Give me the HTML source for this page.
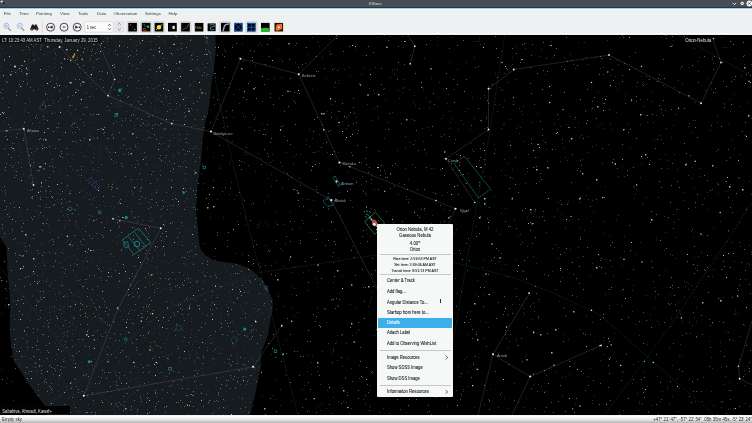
<!DOCTYPE html>
<html><head><meta charset="utf-8">
<style>
*{margin:0;padding:0;box-sizing:border-box}
html,body{width:752px;height:423px;overflow:hidden;background:#000;font-family:"Liberation Sans",sans-serif}
#wrap{position:absolute;left:0;top:0;width:752px;height:423px;overflow:hidden;will-change:transform}
.a{position:absolute}
#title{left:0;top:0;width:752px;height:8px;background:#464d54}
#blue{left:0;top:8px;width:752px;height:1px;background:#8fd0f2}
#bar{left:0;top:9px;width:752px;height:26px;background:#eff0f1}
.menu{top:11.1px;font-size:4.4px;line-height:5px;color:#3d4146;white-space:nowrap}
#sky{left:0;top:35px;width:752px;height:380px;background:#000;overflow:hidden}
#status{left:0;top:415px;width:752px;height:8px;background:linear-gradient(#f2f2f2 0%,#fdfdfd 22%,#e4e4e4 60%,#b4b4b4 100%)}
.st{font-size:4.4px;line-height:5px;color:#3a3e42;white-space:nowrap;top:416.6px}
#ctx{left:377px;top:224px;width:76px;height:173.4px;background:#f6f7f7;border-radius:1px;overflow:hidden}
.ci{position:absolute;left:10px;font-size:4.7px;line-height:5px;color:#202326;-webkit-text-stroke-width:0.08px;white-space:nowrap;transform:scaleX(0.89);transform-origin:0 0}
.ct{position:absolute;left:0;width:76px;text-align:center;line-height:5px;color:#202326;-webkit-text-stroke-width:0.08px;white-space:nowrap;transform:scaleX(0.91);transform-origin:38px 0}
.sep{position:absolute;left:2.5px;width:71px;height:0.6px;background:#c6c8ca}
.tb{position:absolute;top:22.8px;width:8.8px;height:8.8px;background:#000}
.tf{position:absolute;top:21.5px;width:11.5px;height:11.5px;background:#dcdddf;border-radius:1px}
</style></head><body><div id="wrap">
<div id="title" class="a"></div>
<div class="a" style="left:369px;top:0.6px;font-size:4.2px;line-height:5px;color:#e0e2e4">KStars</div>
<div id="blue" class="a"></div>
<div id="bar" class="a"></div>
<div class="a" style="left:0;top:33px;width:752px;height:1px;background:#f8f8f8"></div>
<div class="a" style="left:0;top:9px;width:752px;height:1px;background:#f6f7f8"></div>
<div class="a menu" style="left:3.8px">File</div>
<div class="a menu" style="left:19px">Time</div>
<div class="a menu" style="left:36px">Pointing</div>
<div class="a menu" style="left:60px">View</div>
<div class="a menu" style="left:78px">Tools</div>
<div class="a menu" style="left:97px">Data</div>
<div class="a menu" style="left:113.6px">Observation</div>
<div class="a menu" style="left:145px">Settings</div>
<div class="a menu" style="left:168.4px">Help</div>


<svg class="a" style="left:0;top:9px" width="300" height="26" viewBox="0 9 300 26">
 <!-- zoom in -->
 <g><line x1="8" y1="27.8" x2="10.9" y2="30.9" stroke="#8a8e92" stroke-width="1.1"/>
 <circle cx="6.4" cy="25.7" r="2.5" fill="#e8f0f8" stroke="#8aaed8" stroke-width="0.75"/>
 <path d="M5.2,25.7h2.4M6.4,24.5v2.4" stroke="#6a90c8" stroke-width="0.5"/></g>
 <g><line x1="21.4" y1="27.8" x2="24.3" y2="30.9" stroke="#8a8e92" stroke-width="1.1"/>
 <circle cx="19.8" cy="25.7" r="2.5" fill="#e8f0f8" stroke="#8aaed8" stroke-width="0.75"/>
 <path d="M18.6,25.7h2.4" stroke="#6a90c8" stroke-width="0.5"/></g>
 <!-- binoculars -->
 <g><path d="M30.2,29.2 L32,24.6 L33.6,24.4 L34.3,26 L35,24.4 L36.6,24.6 L38.6,29.2 Z" fill="#1a1a1a"/>
 <circle cx="32" cy="28.9" r="1.6" fill="#1a1a1a"/><circle cx="36.8" cy="28.9" r="1.6" fill="#1a1a1a"/>
 <circle cx="32" cy="29.1" r="0.9" fill="#b5501a"/><circle cx="36.8" cy="29.1" r="0.9" fill="#b5501a"/></g>
 <line x1="42.4" y1="20.5" x2="42.4" y2="33" stroke="#c5c7c9" stroke-width="0.5"/>
 <!-- media -->
 <circle cx="50.6" cy="27.2" r="4" fill="#f4f4f4" stroke="#33363a" stroke-width="0.9"/>
 <path d="M52.6,25.6 L49.4,27.2 L52.6,28.8 Z M48,26.4h1.2v1.6h-1.2z" fill="#222"/>
 <circle cx="64.05" cy="27.2" r="4" fill="#f4f4f4" stroke="#33363a" stroke-width="0.9"/>
 <path d="M62.8,26.1h0.9v2.2h-0.9z M64.4,26.1h0.9v2.2h-0.9z" fill="#666"/>
 <circle cx="77.2" cy="27.2" r="4" fill="#f4f4f4" stroke="#33363a" stroke-width="0.9"/>
 <path d="M75.2,25.6 L78.4,27.2 L75.2,28.8 Z M78.8,26.4h1.2v1.6h-1.2z" fill="#222"/>
 <!-- spinbox -->
 <rect x="84.7" y="21.7" width="28.3" height="10.4" rx="0.8" fill="#fcfcfc" stroke="#c4c6c8" stroke-width="0.5"/>
 <text x="86.7" y="29" font-family="Liberation Sans" font-size="5" textLength="9.6" lengthAdjust="spacingAndGlyphs" fill="#2a2e32">1 sec</text>
 <path d="M108.1,25.7 L109.5,24.3 L110.9,25.7 M108.1,28.4 L109.5,29.8 L110.9,28.4" fill="none" stroke="#31363b" stroke-width="0.8"/>
 <rect x="115" y="21.6" width="8.6" height="4.3" rx="0.6" fill="#eaebec" stroke="#c4c6c8" stroke-width="0.4"/>
 <rect x="115" y="27.5" width="8.6" height="4.3" rx="0.6" fill="#eaebec" stroke="#c4c6c8" stroke-width="0.4"/>
 <path d="M117.8,24.6 L119.3,23.2 L120.8,24.6 M117.8,28.8 L119.3,30.2 L120.8,28.8" fill="none" stroke="#4a4e52" stroke-width="0.65"/>
 <!-- toggle frames -->
 <rect x="127" y="21.6" width="11.2" height="11.2" rx="0.8" fill="#dfe0e1" stroke="#c9cacc" stroke-width="0.5"/>
 <rect x="140.6" y="21.6" width="11.2" height="11.2" rx="0.8" fill="#dfe0e1" stroke="#c9cacc" stroke-width="0.5"/>
 <rect x="153.5" y="21.6" width="11.2" height="11.2" rx="0.8" fill="#dfe0e1" stroke="#c9cacc" stroke-width="0.5"/>
 <rect x="180" y="21.6" width="11.2" height="11.2" rx="0.8" fill="#dfe0e1" stroke="#c9cacc" stroke-width="0.5"/>
 <rect x="219.5" y="21.6" width="11.2" height="11.2" rx="0.8" fill="#dfe0e1" stroke="#c9cacc" stroke-width="0.5"/>
 <rect x="245.8" y="21.6" width="11.2" height="11.2" rx="0.8" fill="#dfe0e1" stroke="#c9cacc" stroke-width="0.5"/>
 <!-- icons -->
 <rect x="128.3" y="22.9" width="8.6" height="8.6" fill="#000"/>
 <circle cx="130.4" cy="25" r="0.6" fill="#d88"/><path d="M131.5,28 L133.5,26.8" stroke="#4a7a9a" stroke-width="0.5"/><ellipse cx="134.7" cy="29.2" rx="0.9" ry="0.5" fill="#a9a0e0"/>
 <rect x="141.8" y="22.9" width="8.6" height="8.6" fill="#000"/>
 <path d="M142.6,24.2 L144.4,24.2 L144.4,26 L147,26.6" fill="none" stroke="#2a8a8a" stroke-width="0.6"/><circle cx="148.1" cy="26.7" r="1.2" fill="#1c1"/><path d="M143,28.5 L145.6,28.6 L146,30.7 L143.5,30.4 Z" fill="none" stroke="#c22" stroke-width="0.9"/>
 <rect x="154.7" y="22.9" width="8.6" height="8.6" fill="#000"/>
 <circle cx="159" cy="27.2" r="2.2" fill="#f2e25a"/><path d="M155.8,30 L162.3,24.4" stroke="#e8e030" stroke-width="0.9"/>
 <rect x="168" y="22.9" width="8.8" height="8.6" fill="#000"/>
 <path d="M172.2,26.4 L174.5,25.5 L175,28.6 L172.8,29.6 Z" fill="#f0f0f0"/><path d="M169.5,25.5 L171.5,26.5" stroke="#777" stroke-width="0.4"/>
 <rect x="181.2" y="22.9" width="8.6" height="8.6" fill="#000"/>
 <path d="M182.5,30 L185,28.5 L187,27.5 L188,25 L189,24.5" fill="none" stroke="#aaa" stroke-width="0.5"/>
 <rect x="194.8" y="22.9" width="8.6" height="8.6" fill="#000"/>
 <text x="195.3" y="28.9" font-family="Liberation Serif" font-size="4" fill="#c9c24a">Orb</text>
 <rect x="207.6" y="23.4" width="8" height="7.8" fill="#000"/>
 <path d="M209.2,25 L213.8,24.6 L214.6,26.4 L210,27.4 L211,30 L214.4,29.6" fill="none" stroke="#6fa8d0" stroke-width="0.7"/>
 <rect x="221" y="22.9" width="8.6" height="8.6" fill="#000"/>
 <path d="M223,31 L224.5,26 C225,24.5 226,24 229,24" fill="none" stroke="#98a4c8" stroke-width="1.5"/>
 <rect x="234" y="22.9" width="8.6" height="8.6" fill="#000"/>
 <path d="M234.5,23.4h7.6v7.6h-7.6z M234.5,23.4 L242.1,31 M242.1,23.4 L234.5,31" fill="none" stroke="#2a78ff" stroke-width="0.9" stroke-dasharray="1.1,0.35"/>
 <rect x="247" y="22.9" width="8.6" height="8.6" fill="#000"/>
 <path d="M247.5,23.4h7.6v7.6h-7.6z M251.3,23.4v7.6 M247.5,27.2h7.6" fill="none" stroke="#2a78ff" stroke-width="0.9" stroke-dasharray="1.1,0.35"/>
 <rect x="261" y="22.9" width="8.6" height="8.6" fill="#000"/>
 <path d="M261,28.2 Q265.3,27.4 269.6,28.2 V31.5 H261 Z" fill="#22bb22"/>
 <rect x="274.5" y="22.9" width="8.6" height="8.6" fill="#2a1000"/>
 <path d="M275.5,29.5 L276.5,24.5 L282,23.8 L282.2,29 L277,31 Z" fill="#e8702a"/><circle cx="278.8" cy="27.2" r="1" fill="#fff8e8"/>
</svg>
<!-- titlebar widgets -->
<svg class="a" style="left:0;top:0" width="752" height="8" viewBox="0 0 752 8">
 <circle cx="1.8" cy="1.6" r="1.2" fill="#ddd"/><path d="M2.5,2.6 L4.8,3.6" stroke="#111" stroke-width="1"/>
 <path d="M732.6,2.9 L734.4,4.6 L736.2,2.9" fill="none" stroke="#f0f0f0" stroke-width="0.95"/>
 <path d="M742.2,1.3 L744.3,3.4 L742.2,5.5 L740.1,3.4 Z" fill="#eeeeee"/><circle cx="742.2" cy="3.4" r="1.45" fill="#eeeeee"/><circle cx="742.2" cy="3.4" r="0.55" fill="#464d54"/>
 <circle cx="749.4" cy="3.5" r="2.9" fill="#f6f6f6"/>
 <path d="M748.3,2.4 L750.5,4.6 M750.5,2.4 L748.3,4.6" stroke="#2a2e33" stroke-width="0.8"/>
 <rect x="0" y="7" width="752" height="1" fill="#30353a"/>
</svg>

<div id="sky" class="a">
<svg width="752" height="380" viewBox="0 35 752 380" style="position:absolute;left:0;top:0">
<path d="M0,35 L215.5,35 L215.7,52 L213.6,70 L211.1,87 L209.5,105 L205.3,122 L202.4,140 L201.5,157 L199,175 L196.9,192 L196,210 L197.7,227 L199,243 L200.3,248 L202,251 L205.4,255 L213,260.3 L223.8,261.9 L236,263.4 L248.4,268 L257.6,275 L265.3,284.2 L269.9,293.4 L272.7,300 L272.5,310 L271.1,317 L268,335 L261.5,352 L260,370 L255.7,392 L250,415 L47,415 L46,407 L36.5,395 L26,380 L13.3,360 L10.1,337 L9.8,315 L10.4,305 L9.6,292 L7.4,270 L7.2,260 L6.4,247 L0,236.7 Z" fill="#161b20"/>
<path d="M331,112h1v1h-1zM59,294h1v1h-1zM444,249h1v1h-1zM381,84h1v1h-1zM603,128h1v1h-1zM477,280h1v1h-1zM490,389h1v1h-1zM74,378h1v1h-1zM217,377h1v1h-1zM431,135h1v1h-1zM18,163h1v1h-1zM5,81h1v1h-1zM121,316h1v1h-1zM484,43h1v1h-1zM646,295h1v1h-1zM281,59h1v1h-1zM385,173h1v1h-1zM721,367h1v1h-1zM339,261h1v1h-1zM640,242h1v1h-1zM271,354h1v1h-1zM102,369h1v1h-1zM614,333h1v1h-1zM635,194h1v1h-1zM683,192h1v1h-1zM202,189h1v1h-1zM515,259h1v1h-1zM321,403h1v1h-1zM320,410h1v1h-1zM442,248h1v1h-1zM249,397h1v1h-1zM627,124h1v1h-1zM463,124h1v1h-1zM578,122h1v1h-1zM31,258h1v1h-1zM436,382h1v1h-1zM673,40h1v1h-1zM671,185h1v1h-1zM600,360h1v1h-1zM124,80h1v1h-1zM53,402h1v1h-1zM239,266h1v1h-1zM739,154h1v1h-1zM83,114h1v1h-1zM353,178h1v1h-1zM728,124h1v1h-1zM137,45h1v1h-1zM229,351h1v1h-1zM512,178h1v1h-1zM617,304h1v1h-1zM373,90h1v1h-1zM464,359h1v1h-1zM13,257h1v1h-1zM76,194h1v1h-1zM100,335h1v1h-1zM588,136h1v1h-1zM290,211h1v1h-1zM318,42h1v1h-1zM630,148h1v1h-1zM12,219h1v1h-1zM61,178h1v1h-1zM718,193h1v1h-1zM371,183h1v1h-1zM329,39h1v1h-1zM378,164h1v1h-1zM146,180h1v1h-1zM608,144h1v1h-1zM724,104h1v1h-1zM116,45h1v1h-1zM147,174h1v1h-1zM15,362h1v1h-1zM471,143h1v1h-1zM611,266h1v1h-1zM304,385h1v1h-1zM499,104h1v1h-1zM648,412h1v1h-1zM15,170h1v1h-1zM734,261h1v1h-1zM120,81h1v1h-1zM584,42h1v1h-1zM228,370h1v1h-1zM594,341h1v1h-1zM609,236h1v1h-1zM491,190h1v1h-1zM97,42h1v1h-1zM149,206h1v1h-1zM166,235h1v1h-1zM67,246h1v1h-1zM280,405h1v1h-1zM64,216h1v1h-1zM179,388h1v1h-1zM447,103h1v1h-1zM269,56h1v1h-1zM390,36h1v1h-1zM559,301h1v1h-1zM356,49h1v1h-1zM350,75h1v1h-1zM10,132h1v1h-1zM386,224h1v1h-1zM483,259h1v1h-1zM236,253h1v1h-1zM140,168h1v1h-1zM171,154h1v1h-1zM275,399h1v1h-1zM602,58h1v1h-1zM278,49h1v1h-1zM242,44h1v1h-1zM534,307h1v1h-1zM676,209h1v1h-1zM436,397h1v1h-1zM65,86h1v1h-1zM54,63h1v1h-1zM525,356h1v1h-1zM434,296h1v1h-1zM508,408h1v1h-1zM259,263h1v1h-1zM47,111h1v1h-1zM136,87h1v1h-1zM229,163h1v1h-1zM336,118h1v1h-1zM560,126h1v1h-1zM430,40h1v1h-1zM210,298h1v1h-1zM229,87h1v1h-1zM372,373h1v1h-1zM166,115h1v1h-1zM422,272h1v1h-1zM339,80h1v1h-1zM312,256h1v1h-1zM291,294h1v1h-1zM677,378h1v1h-1zM70,114h1v1h-1zM726,191h1v1h-1zM328,205h1v1h-1zM639,401h1v1h-1zM328,384h1v1h-1zM749,181h1v1h-1zM136,390h1v1h-1zM444,233h1v1h-1zM51,136h1v1h-1zM8,93h1v1h-1zM463,391h1v1h-1zM531,319h1v1h-1zM129,277h1v1h-1zM154,292h1v1h-1zM59,92h1v1h-1zM569,273h1v1h-1zM252,264h1v1h-1zM48,291h1v1h-1zM207,148h1v1h-1zM359,330h1v1h-1zM137,190h1v1h-1zM576,296h1v1h-1zM545,74h1v1h-1zM176,376h1v1h-1zM670,254h1v1h-1zM747,366h1v1h-1zM119,361h1v1h-1zM520,127h1v1h-1zM42,78h1v1h-1zM203,314h1v1h-1zM370,385h1v1h-1zM134,284h1v1h-1zM284,171h1v1h-1zM470,366h1v1h-1zM236,195h1v1h-1zM578,42h1v1h-1zM288,175h1v1h-1zM169,56h1v1h-1zM460,175h1v1h-1zM545,391h1v1h-1zM605,186h1v1h-1zM695,401h1v1h-1zM339,68h1v1h-1zM1,241h1v1h-1zM357,44h1v1h-1zM203,394h1v1h-1zM394,74h1v1h-1zM318,312h1v1h-1zM118,122h1v1h-1zM12,347h1v1h-1zM123,239h1v1h-1zM519,299h1v1h-1zM616,361h1v1h-1zM478,357h1v1h-1zM387,221h1v1h-1zM594,395h1v1h-1zM283,344h1v1h-1zM372,291h1v1h-1zM367,233h1v1h-1zM210,109h1v1h-1zM565,376h1v1h-1zM675,258h1v1h-1zM219,278h1v1h-1zM399,388h1v1h-1zM38,101h1v1h-1zM132,212h1v1h-1zM738,135h1v1h-1zM347,392h1v1h-1zM680,313h1v1h-1zM651,92h1v1h-1zM68,162h1v1h-1zM126,295h1v1h-1zM112,240h1v1h-1zM299,227h1v1h-1zM230,161h1v1h-1zM161,127h1v1h-1zM89,181h1v1h-1zM311,362h1v1h-1zM0,75h1v1h-1zM537,157h1v1h-1zM196,381h1v1h-1zM49,343h1v1h-1zM92,250h1v1h-1zM406,412h1v1h-1zM327,111h1v1h-1zM423,354h1v1h-1zM120,249h1v1h-1zM181,255h1v1h-1zM480,98h1v1h-1zM539,301h1v1h-1zM370,405h1v1h-1zM286,152h1v1h-1zM682,66h1v1h-1zM194,364h1v1h-1zM219,194h1v1h-1zM164,241h1v1h-1zM259,222h1v1h-1zM331,353h1v1h-1zM135,229h1v1h-1zM69,191h1v1h-1zM207,313h1v1h-1zM418,395h1v1h-1zM148,122h1v1h-1zM480,321h1v1h-1zM500,261h1v1h-1zM108,149h1v1h-1zM712,59h1v1h-1zM296,154h1v1h-1zM647,344h1v1h-1zM734,148h1v1h-1zM642,403h1v1h-1zM236,359h1v1h-1zM242,376h1v1h-1zM494,144h1v1h-1zM431,414h1v1h-1zM619,83h1v1h-1zM583,256h1v1h-1zM694,187h1v1h-1zM377,312h1v1h-1zM337,179h1v1h-1zM91,70h1v1h-1zM558,247h1v1h-1z" fill="#2a2c2c"/>
<path d="M74,309h1v1h-1zM564,252h1v1h-1zM429,108h1v1h-1zM351,408h1v1h-1zM40,377h1v1h-1zM149,249h1v1h-1zM451,118h1v1h-1zM228,307h1v1h-1zM345,139h1v1h-1zM673,214h1v1h-1zM28,163h1v1h-1zM246,335h1v1h-1zM513,101h1v1h-1zM43,85h1v1h-1zM28,67h1v1h-1zM739,222h1v1h-1zM692,167h1v1h-1zM543,140h1v1h-1zM390,77h1v1h-1zM667,389h1v1h-1zM691,285h1v1h-1zM29,358h1v1h-1zM249,81h1v1h-1zM228,342h1v1h-1zM271,186h1v1h-1zM371,174h1v1h-1zM239,103h1v1h-1zM656,238h1v1h-1zM683,200h1v1h-1zM213,338h1v1h-1zM83,261h1v1h-1zM46,46h1v1h-1zM603,103h1v1h-1zM145,246h1v1h-1zM253,405h1v1h-1zM433,282h1v1h-1zM501,89h1v1h-1zM531,213h1v1h-1zM215,385h1v1h-1zM363,287h1v1h-1zM398,194h1v1h-1zM720,342h1v1h-1zM355,308h1v1h-1zM363,67h1v1h-1zM717,183h1v1h-1zM723,81h1v1h-1zM28,59h1v1h-1zM252,114h1v1h-1zM41,244h1v1h-1zM525,48h1v1h-1zM279,98h1v1h-1zM343,401h1v1h-1zM636,86h1v1h-1zM170,96h1v1h-1zM274,78h1v1h-1zM249,411h1v1h-1zM524,314h1v1h-1zM361,184h1v1h-1zM10,48h1v1h-1zM639,335h1v1h-1zM422,128h1v1h-1zM201,124h1v1h-1zM148,115h1v1h-1zM596,57h1v1h-1zM739,242h1v1h-1zM547,161h1v1h-1zM719,321h1v1h-1zM165,201h1v1h-1zM444,285h1v1h-1zM327,152h1v1h-1zM581,135h1v1h-1zM331,299h1v1h-1zM623,372h1v1h-1zM707,78h1v1h-1zM259,367h1v1h-1zM567,269h1v1h-1zM245,225h1v1h-1zM618,215h1v1h-1zM32,53h1v1h-1zM369,407h1v1h-1zM232,45h1v1h-1zM512,169h1v1h-1zM650,160h1v1h-1zM205,343h1v1h-1zM27,367h1v1h-1zM424,58h1v1h-1zM366,220h1v1h-1zM61,313h1v1h-1zM255,117h1v1h-1zM562,377h1v1h-1zM363,399h1v1h-1zM484,404h1v1h-1zM18,319h1v1h-1zM149,199h1v1h-1zM8,307h1v1h-1zM662,391h1v1h-1zM479,160h1v1h-1zM31,252h1v1h-1zM90,160h1v1h-1zM2,280h1v1h-1zM655,297h1v1h-1zM258,153h1v1h-1zM312,37h1v1h-1zM647,386h1v1h-1zM642,158h1v1h-1zM483,171h1v1h-1zM71,315h1v1h-1zM644,106h1v1h-1zM409,234h1v1h-1zM474,57h1v1h-1zM244,152h1v1h-1zM630,297h1v1h-1zM316,186h1v1h-1zM280,162h1v1h-1zM75,220h1v1h-1zM115,404h1v1h-1zM359,378h1v1h-1zM257,224h1v1h-1zM486,281h1v1h-1zM456,159h1v1h-1zM609,308h1v1h-1zM134,408h1v1h-1zM503,107h1v1h-1zM447,192h1v1h-1zM26,151h1v1h-1zM232,141h1v1h-1zM670,326h1v1h-1zM242,310h1v1h-1zM483,338h1v1h-1zM451,288h1v1h-1zM340,165h1v1h-1zM165,89h1v1h-1zM657,321h1v1h-1zM284,224h1v1h-1zM512,304h1v1h-1zM148,382h1v1h-1zM64,357h1v1h-1zM101,318h1v1h-1zM602,98h1v1h-1zM129,226h1v1h-1zM450,296h1v1h-1zM588,199h1v1h-1zM377,37h1v1h-1zM677,317h1v1h-1zM377,271h1v1h-1zM669,404h1v1h-1zM124,281h1v1h-1zM707,192h1v1h-1zM750,86h1v1h-1zM229,194h1v1h-1zM624,176h1v1h-1zM104,90h1v1h-1zM92,318h1v1h-1zM556,371h1v1h-1zM467,334h1v1h-1zM412,164h1v1h-1zM164,132h1v1h-1zM635,68h1v1h-1zM721,402h1v1h-1zM653,281h1v1h-1zM91,95h1v1h-1zM675,114h1v1h-1zM726,47h1v1h-1zM384,138h1v1h-1zM681,355h1v1h-1zM385,99h1v1h-1zM503,124h1v1h-1zM523,308h1v1h-1zM481,120h1v1h-1zM342,366h1v1h-1zM68,256h1v1h-1zM267,225h1v1h-1zM631,101h1v1h-1zM8,250h1v1h-1zM113,163h1v1h-1zM34,264h1v1h-1zM527,171h1v1h-1zM586,57h1v1h-1zM526,298h1v1h-1zM347,190h1v1h-1zM237,383h1v1h-1zM126,275h1v1h-1zM458,366h1v1h-1zM410,55h1v1h-1zM574,363h1v1h-1zM260,43h1v1h-1zM131,165h1v1h-1zM294,316h1v1h-1zM533,256h1v1h-1zM637,393h1v1h-1zM587,152h1v1h-1zM164,288h1v1h-1zM334,200h1v1h-1zM495,104h1v1h-1zM284,136h1v1h-1zM27,380h1v1h-1zM306,139h1v1h-1zM283,306h1v1h-1zM136,269h1v1h-1zM133,323h1v1h-1zM35,299h1v1h-1zM730,111h1v1h-1zM262,101h1v1h-1zM26,382h1v1h-1zM88,354h1v1h-1zM390,340h1v1h-1zM306,398h1v1h-1zM282,250h1v1h-1zM504,100h1v1h-1zM101,218h1v1h-1zM326,322h1v1h-1zM204,183h1v1h-1zM338,184h1v1h-1zM64,226h1v1h-1zM435,332h1v1h-1zM555,289h1v1h-1zM570,54h1v1h-1zM669,348h1v1h-1zM699,57h1v1h-1zM32,41h1v1h-1zM384,170h1v1h-1zM739,359h1v1h-1zM522,114h1v1h-1zM632,290h1v1h-1zM214,305h1v1h-1zM726,331h1v1h-1zM648,411h1v1h-1zM695,268h1v1h-1zM311,374h1v1h-1zM146,397h1v1h-1zM402,92h1v1h-1zM262,396h1v1h-1zM728,409h1v1h-1zM539,217h1v1h-1zM61,345h1v1h-1zM334,87h1v1h-1zM51,283h1v1h-1zM671,318h1v1h-1zM713,405h1v1h-1zM227,359h1v1h-1zM21,152h1v1h-1zM72,330h1v1h-1zM610,124h1v1h-1zM712,189h1v1h-1zM258,264h1v1h-1zM475,294h1v1h-1zM474,118h1v1h-1zM235,388h1v1h-1zM656,81h1v1h-1zM285,243h1v1h-1zM262,124h1v1h-1zM723,47h1v1h-1zM134,128h1v1h-1zM12,151h1v1h-1zM272,154h1v1h-1zM317,308h1v1h-1zM2,191h1v1h-1zM580,228h1v1h-1zM137,148h1v1h-1zM670,294h1v1h-1zM192,243h1v1h-1zM371,297h1v1h-1zM566,315h1v1h-1zM535,211h1v1h-1zM232,399h1v1h-1zM713,269h1v1h-1zM273,160h1v1h-1zM579,202h1v1h-1zM57,249h1v1h-1zM609,305h1v1h-1zM93,38h1v1h-1zM42,275h1v1h-1zM432,215h1v1h-1zM247,292h1v1h-1zM5,305h1v1h-1zM352,335h1v1h-1z" fill="#36322c"/>
<path d="M126,149h1v1h-1zM613,159h1v1h-1zM536,293h1v1h-1zM562,139h1v1h-1zM87,317h1v1h-1zM128,154h1v1h-1zM496,248h1v1h-1zM609,109h1v1h-1zM668,303h1v1h-1zM475,67h1v1h-1zM236,264h1v1h-1zM617,168h1v1h-1zM749,368h1v1h-1zM484,128h1v1h-1zM197,56h1v1h-1zM516,296h1v1h-1zM270,93h1v1h-1zM276,240h1v1h-1zM254,119h1v1h-1zM222,78h1v1h-1zM483,306h1v1h-1zM353,107h1v1h-1zM42,105h1v1h-1zM608,387h1v1h-1zM156,190h1v1h-1zM543,211h1v1h-1zM77,127h1v1h-1zM486,346h1v1h-1zM37,250h1v1h-1zM20,255h1v1h-1zM483,143h1v1h-1zM532,243h1v1h-1zM37,118h1v1h-1zM728,230h1v1h-1zM319,163h1v1h-1zM359,83h1v1h-1zM328,240h1v1h-1zM361,162h1v1h-1zM643,312h1v1h-1zM43,334h1v1h-1zM130,285h1v1h-1zM195,146h1v1h-1zM140,188h1v1h-1zM715,88h1v1h-1zM419,108h1v1h-1zM635,52h1v1h-1zM471,125h1v1h-1zM297,351h1v1h-1zM508,364h1v1h-1zM138,297h1v1h-1zM455,139h1v1h-1zM97,138h1v1h-1zM232,331h1v1h-1zM249,339h1v1h-1zM472,338h1v1h-1zM325,245h1v1h-1zM588,385h1v1h-1zM362,236h1v1h-1zM505,221h1v1h-1zM746,345h1v1h-1zM147,131h1v1h-1zM205,299h1v1h-1zM265,265h1v1h-1zM60,263h1v1h-1zM418,150h1v1h-1zM78,411h1v1h-1zM23,413h1v1h-1zM69,326h1v1h-1zM229,359h1v1h-1zM246,147h1v1h-1zM590,206h1v1h-1zM750,75h1v1h-1zM138,255h1v1h-1zM79,67h1v1h-1zM350,200h1v1h-1zM492,84h1v1h-1zM292,229h1v1h-1zM480,157h1v1h-1zM11,356h1v1h-1zM659,275h1v1h-1zM165,157h1v1h-1zM534,104h1v1h-1zM483,143h1v1h-1zM322,124h1v1h-1zM177,78h1v1h-1zM64,273h1v1h-1zM148,236h1v1h-1zM525,208h1v1h-1zM10,165h1v1h-1zM580,160h1v1h-1zM730,207h1v1h-1zM693,312h1v1h-1zM503,314h1v1h-1zM147,113h1v1h-1zM152,257h1v1h-1zM184,112h1v1h-1zM456,306h1v1h-1zM450,315h1v1h-1zM103,133h1v1h-1zM663,115h1v1h-1zM93,157h1v1h-1zM300,240h1v1h-1zM318,271h1v1h-1zM71,125h1v1h-1zM381,68h1v1h-1zM287,318h1v1h-1zM672,36h1v1h-1zM138,315h1v1h-1zM47,358h1v1h-1zM404,64h1v1h-1zM303,356h1v1h-1zM580,239h1v1h-1zM546,58h1v1h-1zM151,199h1v1h-1zM571,182h1v1h-1zM540,173h1v1h-1zM125,118h1v1h-1zM314,152h1v1h-1zM124,138h1v1h-1zM10,329h1v1h-1zM440,169h1v1h-1zM538,299h1v1h-1zM241,161h1v1h-1zM350,189h1v1h-1zM510,334h1v1h-1zM663,59h1v1h-1zM505,330h1v1h-1zM66,202h1v1h-1zM336,199h1v1h-1zM467,270h1v1h-1zM656,354h1v1h-1zM749,284h1v1h-1zM330,130h1v1h-1zM145,125h1v1h-1zM710,325h1v1h-1zM734,79h1v1h-1zM316,412h1v1h-1zM224,67h1v1h-1zM551,402h1v1h-1zM108,184h1v1h-1zM241,169h1v1h-1zM219,145h1v1h-1zM625,103h1v1h-1zM96,207h1v1h-1zM596,199h1v1h-1zM316,71h1v1h-1zM532,44h1v1h-1zM339,111h1v1h-1zM264,149h1v1h-1zM199,330h1v1h-1zM673,228h1v1h-1zM137,411h1v1h-1zM419,285h1v1h-1zM383,381h1v1h-1zM478,296h1v1h-1zM230,188h1v1h-1zM522,361h1v1h-1zM246,99h1v1h-1zM140,97h1v1h-1zM704,269h1v1h-1zM158,99h1v1h-1zM551,402h1v1h-1zM603,317h1v1h-1zM222,155h1v1h-1zM51,196h1v1h-1zM390,188h1v1h-1zM135,276h1v1h-1zM296,43h1v1h-1zM697,379h1v1h-1zM749,362h1v1h-1zM89,215h1v1h-1zM219,353h1v1h-1zM76,386h1v1h-1zM622,75h1v1h-1zM329,404h1v1h-1zM133,235h1v1h-1zM400,409h1v1h-1zM92,365h1v1h-1zM480,120h1v1h-1zM185,120h1v1h-1zM21,69h1v1h-1zM573,274h1v1h-1zM538,316h1v1h-1z" fill="#505250"/>
<path d="M590,334h1v1h-1zM74,95h1v1h-1zM625,94h1v1h-1zM411,316h1v1h-1zM154,77h1v1h-1zM63,132h1v1h-1zM53,87h1v1h-1zM225,87h1v1h-1zM86,406h1v1h-1zM665,87h1v1h-1zM23,188h1v1h-1zM275,379h1v1h-1zM346,238h1v1h-1zM668,168h1v1h-1zM460,253h1v1h-1zM221,82h1v1h-1zM660,401h1v1h-1zM660,159h1v1h-1zM516,69h1v1h-1zM319,134h1v1h-1zM507,347h1v1h-1zM81,119h1v1h-1zM449,161h1v1h-1zM334,68h1v1h-1zM300,154h1v1h-1zM222,54h1v1h-1zM654,308h1v1h-1zM208,38h1v1h-1zM591,221h1v1h-1zM133,42h1v1h-1zM379,412h1v1h-1zM356,180h1v1h-1zM664,250h1v1h-1zM243,198h1v1h-1zM63,307h1v1h-1zM728,231h1v1h-1zM174,258h1v1h-1zM356,332h1v1h-1zM720,351h1v1h-1zM356,117h1v1h-1zM104,135h1v1h-1zM575,404h1v1h-1zM270,249h1v1h-1zM278,294h1v1h-1zM640,124h1v1h-1zM329,169h1v1h-1zM600,56h1v1h-1zM693,237h1v1h-1zM172,260h1v1h-1zM693,41h1v1h-1zM399,183h1v1h-1zM415,105h1v1h-1zM151,260h1v1h-1zM31,159h1v1h-1zM188,309h1v1h-1zM446,329h1v1h-1zM523,141h1v1h-1zM109,49h1v1h-1zM592,200h1v1h-1zM244,162h1v1h-1zM22,159h1v1h-1zM245,116h1v1h-1zM41,242h1v1h-1zM686,282h1v1h-1zM641,76h1v1h-1zM405,168h1v1h-1zM702,235h1v1h-1zM382,351h1v1h-1zM703,377h1v1h-1zM337,305h1v1h-1zM603,354h1v1h-1zM493,292h1v1h-1zM240,213h1v1h-1zM69,283h1v1h-1zM75,329h1v1h-1zM160,82h1v1h-1zM444,158h1v1h-1zM449,128h1v1h-1zM642,388h1v1h-1zM748,72h1v1h-1zM488,327h1v1h-1zM67,305h1v1h-1zM697,61h1v1h-1zM312,138h1v1h-1zM449,184h1v1h-1zM58,391h1v1h-1zM264,201h1v1h-1zM202,272h1v1h-1zM39,215h1v1h-1zM97,317h1v1h-1zM43,294h1v1h-1zM143,139h1v1h-1zM188,234h1v1h-1zM49,307h1v1h-1zM616,219h1v1h-1zM73,363h1v1h-1zM412,119h1v1h-1zM654,140h1v1h-1zM397,150h1v1h-1zM677,169h1v1h-1zM229,367h1v1h-1zM414,95h1v1h-1zM36,181h1v1h-1zM67,240h1v1h-1zM280,248h1v1h-1zM583,373h1v1h-1zM555,244h1v1h-1zM578,257h1v1h-1zM50,201h1v1h-1zM152,350h1v1h-1zM403,228h1v1h-1zM219,408h1v1h-1zM582,256h1v1h-1zM618,176h1v1h-1zM484,176h1v1h-1zM666,128h1v1h-1zM386,46h1v1h-1zM308,54h1v1h-1zM676,237h1v1h-1zM190,291h1v1h-1zM13,328h1v1h-1zM367,224h1v1h-1zM744,64h1v1h-1zM723,297h1v1h-1zM514,383h1v1h-1zM448,259h1v1h-1zM94,378h1v1h-1zM430,259h1v1h-1zM251,204h1v1h-1zM55,253h1v1h-1zM261,45h1v1h-1zM522,270h1v1h-1zM751,64h1v1h-1zM508,314h1v1h-1zM554,123h1v1h-1zM505,264h1v1h-1zM89,387h1v1h-1zM639,403h1v1h-1zM537,113h1v1h-1zM483,294h1v1h-1zM193,86h1v1h-1zM740,246h1v1h-1zM216,373h1v1h-1zM96,299h1v1h-1zM295,189h1v1h-1zM384,35h1v1h-1zM723,384h1v1h-1zM257,344h1v1h-1zM31,238h1v1h-1zM656,115h1v1h-1zM102,319h1v1h-1zM291,308h1v1h-1zM338,152h1v1h-1zM201,393h1v1h-1zM497,111h1v1h-1zM646,84h1v1h-1zM615,86h1v1h-1zM192,285h1v1h-1zM721,407h1v1h-1zM116,237h1v1h-1zM606,96h1v1h-1zM454,233h1v1h-1zM217,346h1v1h-1zM180,303h1v1h-1zM347,172h1v1h-1zM18,367h1v1h-1zM26,343h1v1h-1zM705,90h1v1h-1zM168,263h1v1h-1zM431,168h1v1h-1zM312,356h1v1h-1zM420,320h1v1h-1zM213,157h1v1h-1zM18,65h1v1h-1zM483,276h1v1h-1zM570,116h1v1h-1zM352,246h1v1h-1zM635,324h1v1h-1zM347,358h1v1h-1zM265,222h1v1h-1zM188,351h1v1h-1zM495,73h1v1h-1zM619,37h1v1h-1zM342,388h1v1h-1zM256,360h1v1h-1zM136,275h1v1h-1zM116,105h1v1h-1zM331,300h1v1h-1zM245,217h1v1h-1zM402,36h1v1h-1zM672,365h1v1h-1zM378,116h1v1h-1zM62,297h1v1h-1zM150,213h1v1h-1zM258,45h1v1h-1zM275,352h1v1h-1zM568,201h1v1h-1zM385,129h1v1h-1zM49,153h1v1h-1zM593,212h1v1h-1zM37,337h1v1h-1zM401,41h1v1h-1zM621,305h1v1h-1zM174,146h1v1h-1zM716,167h1v1h-1zM220,168h1v1h-1zM332,413h1v1h-1zM288,179h1v1h-1zM564,307h1v1h-1zM1,369h1v1h-1zM370,390h1v1h-1zM650,314h1v1h-1zM183,325h1v1h-1zM76,326h1v1h-1zM223,127h1v1h-1zM61,340h1v1h-1zM739,106h1v1h-1zM406,264h1v1h-1zM113,152h1v1h-1zM161,237h1v1h-1zM375,210h1v1h-1zM118,353h1v1h-1zM32,165h1v1h-1zM467,386h1v1h-1zM170,371h1v1h-1zM367,104h1v1h-1zM219,166h1v1h-1zM449,62h1v1h-1zM101,280h1v1h-1zM276,222h1v1h-1zM89,390h1v1h-1zM478,369h1v1h-1zM293,163h1v1h-1zM520,244h1v1h-1zM699,168h1v1h-1zM112,344h1v1h-1zM518,126h1v1h-1zM732,200h1v1h-1zM249,127h1v1h-1zM378,239h1v1h-1zM426,153h1v1h-1zM622,265h1v1h-1zM157,212h1v1h-1zM121,229h1v1h-1zM443,209h1v1h-1zM196,327h1v1h-1zM142,233h1v1h-1zM73,119h1v1h-1z" fill="#303232"/>
<path d="M47,320h1v1h-1zM147,87h1v1h-1zM556,48h1v1h-1zM658,81h1v1h-1zM187,252h1v1h-1zM566,248h1v1h-1zM185,138h1v1h-1zM72,355h1v1h-1zM390,294h1v1h-1zM485,164h1v1h-1zM78,280h1v1h-1zM730,41h1v1h-1zM466,316h1v1h-1zM67,214h1v1h-1zM162,200h1v1h-1zM49,186h1v1h-1zM649,79h1v1h-1zM731,81h1v1h-1zM730,399h1v1h-1zM643,392h1v1h-1zM622,81h1v1h-1zM567,61h1v1h-1zM377,106h1v1h-1zM471,377h1v1h-1zM743,42h1v1h-1zM5,136h1v1h-1zM303,206h1v1h-1zM684,143h1v1h-1zM89,346h1v1h-1zM724,356h1v1h-1zM488,103h1v1h-1zM35,363h1v1h-1zM300,243h1v1h-1zM375,270h1v1h-1zM207,350h1v1h-1zM509,188h1v1h-1zM232,266h1v1h-1zM69,322h1v1h-1zM583,289h1v1h-1zM0,92h1v1h-1zM659,181h1v1h-1zM333,252h1v1h-1zM273,104h1v1h-1zM704,56h1v1h-1zM561,204h1v1h-1zM535,209h1v1h-1zM265,64h1v1h-1zM554,55h1v1h-1zM389,258h1v1h-1zM226,380h1v1h-1zM424,149h1v1h-1zM723,322h1v1h-1zM401,123h1v1h-1zM697,194h1v1h-1zM413,144h1v1h-1zM627,175h1v1h-1zM622,144h1v1h-1zM177,49h1v1h-1zM271,138h1v1h-1zM656,404h1v1h-1zM487,100h1v1h-1zM722,62h1v1h-1zM612,69h1v1h-1zM161,372h1v1h-1zM599,266h1v1h-1zM446,73h1v1h-1zM130,148h1v1h-1zM93,67h1v1h-1zM347,395h1v1h-1zM466,79h1v1h-1zM334,151h1v1h-1zM745,122h1v1h-1zM434,104h1v1h-1zM729,339h1v1h-1zM419,217h1v1h-1zM226,117h1v1h-1zM55,148h1v1h-1zM652,114h1v1h-1zM442,370h1v1h-1zM650,222h1v1h-1zM38,301h1v1h-1zM366,206h1v1h-1zM674,295h1v1h-1zM718,184h1v1h-1zM261,164h1v1h-1zM600,56h1v1h-1zM83,52h1v1h-1zM738,177h1v1h-1zM253,246h1v1h-1zM712,322h1v1h-1zM613,275h1v1h-1zM46,345h1v1h-1zM389,113h1v1h-1zM334,276h1v1h-1zM351,250h1v1h-1zM609,373h1v1h-1zM29,245h1v1h-1zM150,49h1v1h-1zM177,237h1v1h-1zM49,252h1v1h-1zM140,125h1v1h-1zM668,217h1v1h-1zM366,367h1v1h-1zM547,333h1v1h-1zM382,248h1v1h-1zM424,293h1v1h-1zM739,406h1v1h-1zM619,414h1v1h-1zM378,220h1v1h-1zM560,270h1v1h-1zM334,241h1v1h-1zM147,393h1v1h-1zM438,329h1v1h-1zM600,319h1v1h-1zM356,182h1v1h-1zM152,358h1v1h-1zM21,71h1v1h-1zM610,245h1v1h-1zM611,287h1v1h-1zM661,109h1v1h-1zM214,401h1v1h-1zM324,308h1v1h-1zM408,294h1v1h-1zM651,327h1v1h-1zM443,344h1v1h-1zM250,220h1v1h-1zM572,295h1v1h-1zM738,290h1v1h-1zM146,250h1v1h-1zM610,59h1v1h-1zM740,279h1v1h-1zM682,371h1v1h-1zM624,63h1v1h-1zM416,130h1v1h-1zM387,177h1v1h-1zM426,336h1v1h-1zM153,88h1v1h-1zM530,230h1v1h-1zM103,87h1v1h-1zM416,378h1v1h-1zM442,346h1v1h-1zM488,274h1v1h-1zM45,106h1v1h-1zM239,192h1v1h-1zM239,165h1v1h-1zM149,253h1v1h-1zM72,245h1v1h-1zM432,126h1v1h-1zM426,167h1v1h-1zM380,175h1v1h-1zM533,223h1v1h-1zM531,143h1v1h-1zM636,96h1v1h-1z" fill="#606058"/>
<path d="M315,321h1v1h-1zM72,141h1v1h-1zM522,44h1v1h-1zM623,37h1v1h-1zM572,138h1v1h-1zM166,376h1v1h-1zM350,136h1v1h-1zM732,297h1v1h-1zM215,73h1v1h-1zM677,181h1v1h-1zM335,244h1v1h-1zM103,237h1v1h-1zM397,79h1v1h-1zM516,228h1v1h-1zM695,202h1v1h-1zM114,89h1v1h-1zM97,286h1v1h-1zM527,168h1v1h-1zM419,300h1v1h-1zM479,185h1v1h-1zM87,324h1v1h-1zM592,108h1v1h-1zM196,197h1v1h-1zM512,313h1v1h-1zM367,241h1v1h-1zM79,351h1v1h-1zM58,127h1v1h-1zM405,41h1v1h-1zM302,64h1v1h-1zM275,357h1v1h-1zM664,322h1v1h-1zM580,171h1v1h-1zM29,371h1v1h-1zM475,356h1v1h-1zM441,136h1v1h-1zM6,298h1v1h-1zM656,214h1v1h-1zM28,47h1v1h-1zM576,278h1v1h-1zM405,326h1v1h-1zM696,336h1v1h-1zM152,125h1v1h-1zM183,149h1v1h-1zM489,409h1v1h-1zM672,285h1v1h-1zM216,308h1v1h-1zM723,261h1v1h-1zM253,203h1v1h-1zM290,241h1v1h-1zM42,145h1v1h-1zM458,194h1v1h-1zM166,192h1v1h-1zM461,291h1v1h-1zM358,130h1v1h-1zM191,108h1v1h-1zM121,125h1v1h-1zM679,92h1v1h-1zM42,223h1v1h-1zM378,189h1v1h-1zM707,267h1v1h-1zM136,54h1v1h-1zM32,182h1v1h-1zM476,236h1v1h-1zM353,123h1v1h-1zM336,298h1v1h-1zM5,209h1v1h-1zM60,412h1v1h-1zM644,397h1v1h-1zM689,396h1v1h-1zM553,412h1v1h-1zM542,135h1v1h-1zM358,398h1v1h-1zM164,225h1v1h-1zM515,157h1v1h-1zM457,160h1v1h-1zM130,372h1v1h-1zM416,399h1v1h-1zM602,148h1v1h-1zM111,403h1v1h-1zM473,151h1v1h-1zM69,82h1v1h-1zM513,104h1v1h-1zM749,371h1v1h-1zM141,317h1v1h-1zM106,280h1v1h-1zM313,314h1v1h-1zM81,166h1v1h-1zM246,384h1v1h-1zM188,314h1v1h-1zM489,207h1v1h-1zM562,109h1v1h-1zM580,197h1v1h-1zM116,162h1v1h-1zM440,270h1v1h-1zM250,50h1v1h-1zM354,113h1v1h-1zM123,145h1v1h-1zM264,84h1v1h-1zM694,273h1v1h-1zM544,220h1v1h-1zM732,212h1v1h-1zM299,375h1v1h-1zM722,401h1v1h-1zM92,260h1v1h-1zM210,122h1v1h-1zM390,174h1v1h-1zM581,165h1v1h-1zM541,179h1v1h-1zM307,411h1v1h-1zM698,82h1v1h-1zM665,35h1v1h-1zM284,111h1v1h-1zM512,48h1v1h-1zM452,169h1v1h-1zM487,218h1v1h-1zM421,209h1v1h-1zM107,346h1v1h-1zM177,311h1v1h-1zM289,259h1v1h-1zM746,74h1v1h-1zM669,304h1v1h-1zM76,142h1v1h-1zM224,56h1v1h-1zM381,84h1v1h-1zM316,316h1v1h-1zM87,395h1v1h-1zM504,296h1v1h-1zM506,68h1v1h-1zM74,122h1v1h-1zM615,164h1v1h-1zM217,232h1v1h-1zM533,374h1v1h-1zM270,162h1v1h-1zM605,273h1v1h-1zM578,219h1v1h-1zM583,333h1v1h-1zM148,332h1v1h-1zM118,102h1v1h-1zM236,43h1v1h-1zM268,250h1v1h-1zM197,209h1v1h-1zM107,391h1v1h-1zM429,411h1v1h-1zM8,124h1v1h-1zM444,175h1v1h-1zM18,162h1v1h-1zM236,363h1v1h-1zM401,350h1v1h-1zM288,106h1v1h-1zM382,395h1v1h-1zM365,395h1v1h-1zM4,112h1v1h-1zM39,366h1v1h-1zM155,393h1v1h-1zM580,237h1v1h-1zM414,246h1v1h-1zM516,53h1v1h-1zM317,192h1v1h-1zM302,407h1v1h-1zM291,177h1v1h-1zM628,132h1v1h-1zM628,317h1v1h-1zM221,286h1v1h-1zM335,308h1v1h-1zM102,71h1v1h-1zM97,129h1v1h-1z" fill="#4a5e68"/>
<path d="M105,332h1v1h-1zM306,162h1v1h-1zM367,384h1v1h-1zM199,157h1v1h-1zM444,134h1v1h-1zM750,293h1v1h-1zM518,192h1v1h-1zM702,334h1v1h-1zM571,60h1v1h-1zM240,408h1v1h-1zM47,350h1v1h-1zM392,246h1v1h-1zM459,162h1v1h-1zM89,60h1v1h-1zM381,312h1v1h-1zM310,389h1v1h-1zM381,165h1v1h-1zM157,179h1v1h-1zM655,148h1v1h-1zM169,386h1v1h-1zM107,41h1v1h-1zM173,168h1v1h-1zM355,275h1v1h-1zM290,144h1v1h-1zM473,364h1v1h-1zM234,376h1v1h-1zM223,117h1v1h-1zM480,216h1v1h-1zM462,212h1v1h-1zM478,108h1v1h-1zM538,318h1v1h-1zM488,294h1v1h-1zM579,283h1v1h-1zM36,115h1v1h-1zM185,105h1v1h-1zM19,84h1v1h-1zM294,267h1v1h-1zM276,180h1v1h-1zM463,40h1v1h-1zM711,125h1v1h-1zM520,62h1v1h-1zM724,107h1v1h-1zM207,315h1v1h-1zM686,163h1v1h-1zM371,179h1v1h-1zM673,343h1v1h-1zM384,371h1v1h-1zM343,51h1v1h-1zM357,145h1v1h-1zM710,347h1v1h-1zM73,356h1v1h-1zM540,121h1v1h-1zM592,101h1v1h-1zM245,407h1v1h-1zM500,394h1v1h-1zM86,374h1v1h-1zM338,306h1v1h-1zM591,309h1v1h-1zM449,136h1v1h-1zM672,45h1v1h-1zM248,83h1v1h-1zM468,238h1v1h-1zM213,97h1v1h-1zM466,243h1v1h-1zM336,35h1v1h-1zM707,180h1v1h-1zM392,165h1v1h-1zM196,190h1v1h-1zM600,383h1v1h-1zM657,139h1v1h-1zM394,186h1v1h-1zM724,266h1v1h-1zM31,152h1v1h-1zM69,289h1v1h-1zM514,400h1v1h-1zM523,271h1v1h-1zM179,153h1v1h-1zM408,202h1v1h-1zM360,361h1v1h-1zM104,301h1v1h-1zM76,92h1v1h-1zM93,313h1v1h-1zM369,410h1v1h-1zM593,380h1v1h-1zM246,369h1v1h-1zM316,189h1v1h-1zM385,268h1v1h-1zM287,173h1v1h-1zM187,404h1v1h-1zM165,278h1v1h-1zM222,191h1v1h-1zM391,261h1v1h-1zM369,167h1v1h-1zM90,114h1v1h-1zM141,60h1v1h-1zM684,36h1v1h-1zM268,156h1v1h-1zM629,225h1v1h-1zM508,226h1v1h-1zM37,275h1v1h-1zM651,261h1v1h-1zM510,226h1v1h-1zM705,270h1v1h-1zM352,381h1v1h-1zM212,413h1v1h-1zM495,371h1v1h-1zM417,189h1v1h-1zM59,155h1v1h-1zM368,392h1v1h-1zM739,285h1v1h-1zM256,244h1v1h-1zM214,73h1v1h-1zM610,357h1v1h-1zM95,307h1v1h-1zM84,125h1v1h-1zM461,394h1v1h-1zM210,53h1v1h-1zM495,36h1v1h-1zM543,70h1v1h-1zM537,391h1v1h-1zM531,55h1v1h-1zM308,382h1v1h-1zM282,61h1v1h-1zM185,188h1v1h-1zM66,386h1v1h-1zM498,302h1v1h-1zM398,46h1v1h-1zM404,184h1v1h-1zM678,287h1v1h-1zM270,38h1v1h-1zM254,51h1v1h-1zM743,56h1v1h-1zM62,207h1v1h-1zM659,74h1v1h-1zM40,317h1v1h-1zM129,294h1v1h-1zM30,148h1v1h-1zM428,274h1v1h-1zM61,373h1v1h-1zM260,266h1v1h-1zM305,399h1v1h-1zM402,221h1v1h-1zM530,67h1v1h-1zM459,250h1v1h-1zM557,114h1v1h-1zM138,230h1v1h-1zM742,131h1v1h-1zM290,91h1v1h-1zM245,365h1v1h-1zM286,236h1v1h-1zM686,333h1v1h-1zM119,402h1v1h-1zM109,110h1v1h-1zM449,48h1v1h-1zM743,324h1v1h-1zM33,46h1v1h-1zM709,319h1v1h-1zM173,169h1v1h-1zM546,407h1v1h-1zM360,347h1v1h-1zM692,229h1v1h-1zM136,350h1v1h-1z" fill="#60524a"/>
<path d="M577,65h1v1h-1zM608,289h1v1h-1zM317,366h1v1h-1zM670,381h1v1h-1zM29,49h1v1h-1zM397,399h1v1h-1zM28,112h1v1h-1zM671,109h1v1h-1zM146,164h1v1h-1zM141,364h1v1h-1zM212,291h1v1h-1zM74,235h1v1h-1zM111,404h1v1h-1zM331,221h1v1h-1zM395,163h1v1h-1zM381,297h1v1h-1zM435,234h1v1h-1zM633,269h1v1h-1zM608,365h1v1h-1zM287,140h1v1h-1zM695,127h1v1h-1zM484,287h1v1h-1zM6,117h1v1h-1zM217,55h1v1h-1zM300,356h1v1h-1zM376,329h1v1h-1zM560,385h1v1h-1zM252,57h1v1h-1zM726,413h1v1h-1zM267,44h1v1h-1zM232,110h1v1h-1zM244,200h1v1h-1zM530,83h1v1h-1zM316,239h1v1h-1zM25,372h1v1h-1zM708,292h1v1h-1zM140,104h1v1h-1zM173,381h1v1h-1zM91,55h1v1h-1zM193,148h1v1h-1zM457,45h1v1h-1zM660,382h1v1h-1zM633,167h1v1h-1zM415,390h1v1h-1zM0,277h1v1h-1zM110,338h1v1h-1zM567,204h1v1h-1zM697,137h1v1h-1zM574,412h1v1h-1zM112,187h1v1h-1zM596,118h1v1h-1zM710,190h1v1h-1zM16,91h1v1h-1zM428,245h1v1h-1zM692,65h1v1h-1zM331,117h1v1h-1zM639,321h1v1h-1zM585,334h1v1h-1zM730,157h1v1h-1zM24,130h1v1h-1zM704,175h1v1h-1zM418,391h1v1h-1zM745,83h1v1h-1zM271,274h1v1h-1zM158,346h1v1h-1zM726,366h1v1h-1zM630,250h1v1h-1zM637,82h1v1h-1zM179,357h1v1h-1zM599,404h1v1h-1zM317,117h1v1h-1zM491,260h1v1h-1zM707,235h1v1h-1zM344,116h1v1h-1zM709,366h1v1h-1zM414,120h1v1h-1zM365,158h1v1h-1zM101,377h1v1h-1zM298,67h1v1h-1zM604,197h1v1h-1zM282,95h1v1h-1zM275,275h1v1h-1zM16,351h1v1h-1zM146,230h1v1h-1zM524,260h1v1h-1zM647,115h1v1h-1zM368,172h1v1h-1zM21,356h1v1h-1zM594,97h1v1h-1zM601,258h1v1h-1zM479,182h1v1h-1zM531,93h1v1h-1zM185,116h1v1h-1zM563,341h1v1h-1zM16,304h1v1h-1zM146,319h1v1h-1zM459,165h1v1h-1zM741,262h1v1h-1zM744,249h1v1h-1zM255,87h1v1h-1zM372,258h1v1h-1zM666,38h1v1h-1zM60,156h1v1h-1zM147,74h1v1h-1zM486,118h1v1h-1zM487,127h1v1h-1zM36,115h1v1h-1zM354,257h1v1h-1zM270,398h1v1h-1zM327,199h1v1h-1zM365,287h1v1h-1zM167,392h1v1h-1zM659,105h1v1h-1zM100,277h1v1h-1zM228,232h1v1h-1zM32,189h1v1h-1zM65,320h1v1h-1zM299,93h1v1h-1zM138,216h1v1h-1zM545,142h1v1h-1zM239,160h1v1h-1zM415,73h1v1h-1zM543,42h1v1h-1zM188,388h1v1h-1zM371,274h1v1h-1zM424,189h1v1h-1zM313,131h1v1h-1zM613,80h1v1h-1zM296,295h1v1h-1zM134,310h1v1h-1zM348,125h1v1h-1zM666,248h1v1h-1zM743,376h1v1h-1zM366,164h1v1h-1zM259,130h1v1h-1zM576,398h1v1h-1zM80,324h1v1h-1zM5,288h1v1h-1zM733,253h1v1h-1zM93,114h1v1h-1zM575,117h1v1h-1zM321,278h1v1h-1zM256,98h1v1h-1zM652,267h1v1h-1zM745,270h1v1h-1zM143,367h1v1h-1zM385,319h1v1h-1zM2,89h1v1h-1zM604,103h1v1h-1zM48,326h1v1h-1zM180,166h1v1h-1zM232,47h1v1h-1zM352,155h1v1h-1zM30,87h1v1h-1zM444,221h1v1h-1zM728,149h1v1h-1zM70,193h1v1h-1zM551,95h1v1h-1zM373,52h1v1h-1zM696,391h1v1h-1z" fill="#6a5a48"/>
<path d="M696,307h1v1h-1zM586,195h1v1h-1zM573,64h1v1h-1zM426,97h1v1h-1zM527,327h1v1h-1zM17,359h1v1h-1zM270,97h1v1h-1zM3,169h1v1h-1zM560,200h1v1h-1zM223,217h1v1h-1zM733,340h1v1h-1zM79,342h1v1h-1zM144,248h1v1h-1zM255,171h1v1h-1zM424,210h1v1h-1zM563,147h1v1h-1zM93,198h1v1h-1zM715,92h1v1h-1zM537,333h1v1h-1zM308,270h1v1h-1zM405,136h1v1h-1zM300,185h1v1h-1zM407,391h1v1h-1zM409,300h1v1h-1zM409,89h1v1h-1zM186,241h1v1h-1zM380,170h1v1h-1zM363,190h1v1h-1zM546,149h1v1h-1zM447,406h1v1h-1zM661,139h1v1h-1zM433,168h1v1h-1zM25,225h1v1h-1zM263,331h1v1h-1zM309,410h1v1h-1zM303,272h1v1h-1zM273,395h1v1h-1zM638,361h1v1h-1zM712,323h1v1h-1zM290,257h1v1h-1zM558,328h1v1h-1zM309,129h1v1h-1zM28,61h1v1h-1zM107,276h1v1h-1zM22,356h1v1h-1zM627,279h1v1h-1zM568,339h1v1h-1zM6,290h1v1h-1zM94,122h1v1h-1zM362,176h1v1h-1zM466,190h1v1h-1zM366,229h1v1h-1zM405,322h1v1h-1zM67,98h1v1h-1zM100,128h1v1h-1zM389,413h1v1h-1zM357,252h1v1h-1zM167,361h1v1h-1zM255,65h1v1h-1zM421,82h1v1h-1zM415,140h1v1h-1zM526,398h1v1h-1zM180,406h1v1h-1zM264,129h1v1h-1zM275,262h1v1h-1zM234,347h1v1h-1zM598,126h1v1h-1zM474,41h1v1h-1zM562,396h1v1h-1zM370,302h1v1h-1zM155,39h1v1h-1zM569,220h1v1h-1zM244,346h1v1h-1zM257,227h1v1h-1zM678,80h1v1h-1zM533,373h1v1h-1zM735,313h1v1h-1zM268,79h1v1h-1zM569,374h1v1h-1zM335,229h1v1h-1zM671,303h1v1h-1zM508,82h1v1h-1zM276,309h1v1h-1zM89,122h1v1h-1zM695,120h1v1h-1zM203,355h1v1h-1zM299,206h1v1h-1zM624,236h1v1h-1zM526,354h1v1h-1zM333,282h1v1h-1zM504,398h1v1h-1zM316,278h1v1h-1zM448,241h1v1h-1zM409,235h1v1h-1zM244,291h1v1h-1zM34,367h1v1h-1zM495,149h1v1h-1zM380,307h1v1h-1zM520,234h1v1h-1zM103,80h1v1h-1zM723,103h1v1h-1zM21,209h1v1h-1zM36,195h1v1h-1zM63,68h1v1h-1zM646,197h1v1h-1zM680,344h1v1h-1zM329,51h1v1h-1zM75,306h1v1h-1zM261,364h1v1h-1zM389,374h1v1h-1zM90,136h1v1h-1zM75,302h1v1h-1zM56,77h1v1h-1zM406,196h1v1h-1zM56,346h1v1h-1zM518,402h1v1h-1zM702,401h1v1h-1zM684,297h1v1h-1zM374,189h1v1h-1zM590,275h1v1h-1zM439,82h1v1h-1zM78,248h1v1h-1zM87,107h1v1h-1zM392,70h1v1h-1zM551,41h1v1h-1zM306,144h1v1h-1zM533,385h1v1h-1zM325,139h1v1h-1zM192,344h1v1h-1zM242,377h1v1h-1zM294,221h1v1h-1zM43,216h1v1h-1zM659,324h1v1h-1zM531,139h1v1h-1zM612,129h1v1h-1zM523,312h1v1h-1zM218,408h1v1h-1zM499,87h1v1h-1zM383,295h1v1h-1zM522,305h1v1h-1zM346,117h1v1h-1zM202,375h1v1h-1zM721,269h1v1h-1zM750,350h1v1h-1zM346,343h1v1h-1zM501,128h1v1h-1zM230,142h1v1h-1zM80,181h1v1h-1zM125,95h1v1h-1zM531,122h1v1h-1zM191,329h1v1h-1zM486,205h1v1h-1zM501,392h1v1h-1zM101,334h1v1h-1zM313,200h1v1h-1zM394,69h1v1h-1zM454,253h1v1h-1zM626,353h1v1h-1zM398,90h1v1h-1zM370,69h1v1h-1zM575,68h1v1h-1zM525,174h1v1h-1zM592,263h1v1h-1zM575,127h1v1h-1zM487,131h1v1h-1zM220,105h1v1h-1zM450,210h1v1h-1zM644,371h1v1h-1zM566,124h1v1h-1zM310,232h1v1h-1zM280,389h1v1h-1zM565,316h1v1h-1zM77,246h1v1h-1zM349,46h1v1h-1zM57,42h1v1h-1zM482,267h1v1h-1zM338,402h1v1h-1zM18,212h1v1h-1zM598,92h1v1h-1zM512,64h1v1h-1zM544,274h1v1h-1zM405,148h1v1h-1zM332,104h1v1h-1zM118,379h1v1h-1zM615,76h1v1h-1zM246,336h1v1h-1zM501,253h1v1h-1zM712,57h1v1h-1zM88,222h1v1h-1zM384,293h1v1h-1zM528,154h1v1h-1zM616,112h1v1h-1zM479,38h1v1h-1zM735,310h1v1h-1zM397,165h1v1h-1zM107,151h1v1h-1zM480,44h1v1h-1zM712,276h1v1h-1zM60,61h1v1h-1zM561,214h1v1h-1zM325,309h1v1h-1zM93,221h1v1h-1zM505,175h1v1h-1zM642,82h1v1h-1zM148,275h1v1h-1zM64,306h1v1h-1zM478,66h1v1h-1zM113,79h1v1h-1zM317,371h1v1h-1zM689,67h1v1h-1zM265,245h1v1h-1zM614,247h1v1h-1zM514,219h1v1h-1zM143,38h1v1h-1zM1,313h1v1h-1zM94,331h1v1h-1zM21,81h1v1h-1zM504,159h1v1h-1zM210,56h1v1h-1zM360,243h1v1h-1zM629,56h1v1h-1zM505,208h1v1h-1zM271,265h1v1h-1zM29,70h1v1h-1zM642,204h1v1h-1zM400,352h1v1h-1zM307,199h1v1h-1zM711,89h1v1h-1zM621,290h1v1h-1zM38,89h1v1h-1zM541,386h1v1h-1zM65,225h1v1h-1zM362,377h1v1h-1zM137,59h1v1h-1zM178,311h1v1h-1zM712,368h1v1h-1zM562,277h1v1h-1zM632,383h1v1h-1zM406,199h1v1h-1zM145,74h1v1h-1zM121,41h1v1h-1zM427,412h1v1h-1zM55,112h1v1h-1zM516,128h1v1h-1zM744,325h1v1h-1zM268,56h1v1h-1zM694,317h1v1h-1zM342,121h1v1h-1zM136,45h1v1h-1zM84,308h1v1h-1zM646,76h1v1h-1zM66,236h1v1h-1zM749,264h1v1h-1zM429,333h1v1h-1zM291,286h1v1h-1zM52,245h1v1h-1zM326,78h1v1h-1zM148,116h1v1h-1z" fill="#34342e"/>
<path d="M476,334h1v1h-1zM530,222h1v1h-1zM265,134h1v1h-1zM1,280h1v1h-1zM182,257h1v1h-1zM158,401h1v1h-1zM510,177h1v1h-1zM319,375h1v1h-1zM263,134h1v1h-1zM44,169h1v1h-1zM34,281h1v1h-1zM108,361h1v1h-1zM426,44h1v1h-1zM57,365h1v1h-1zM289,59h1v1h-1zM461,373h1v1h-1zM524,43h1v1h-1zM670,287h1v1h-1zM169,284h1v1h-1zM463,174h1v1h-1zM533,167h1v1h-1zM122,166h1v1h-1zM16,261h1v1h-1zM254,130h1v1h-1zM123,217h1v1h-1zM564,69h1v1h-1zM366,55h1v1h-1zM610,260h1v1h-1zM445,378h1v1h-1zM326,142h1v1h-1zM497,77h1v1h-1zM736,193h1v1h-1zM388,129h1v1h-1zM4,261h1v1h-1zM83,65h1v1h-1zM636,138h1v1h-1zM172,222h1v1h-1zM479,233h1v1h-1zM6,206h1v1h-1zM315,164h1v1h-1zM628,398h1v1h-1zM102,370h1v1h-1zM186,167h1v1h-1zM660,240h1v1h-1zM272,348h1v1h-1zM457,185h1v1h-1zM421,82h1v1h-1zM401,374h1v1h-1zM544,392h1v1h-1zM413,236h1v1h-1zM571,216h1v1h-1zM730,267h1v1h-1zM497,77h1v1h-1zM547,71h1v1h-1zM671,277h1v1h-1zM148,233h1v1h-1zM422,377h1v1h-1zM238,224h1v1h-1zM427,280h1v1h-1zM542,89h1v1h-1zM57,35h1v1h-1zM751,194h1v1h-1zM564,92h1v1h-1zM462,259h1v1h-1zM718,298h1v1h-1zM262,76h1v1h-1zM735,76h1v1h-1zM480,287h1v1h-1zM273,334h1v1h-1zM356,122h1v1h-1zM498,57h1v1h-1zM466,183h1v1h-1zM290,78h1v1h-1zM117,222h1v1h-1zM687,261h1v1h-1zM580,99h1v1h-1zM496,48h1v1h-1zM586,123h1v1h-1zM306,47h1v1h-1zM733,44h1v1h-1zM451,163h1v1h-1zM515,184h1v1h-1zM146,402h1v1h-1zM198,183h1v1h-1zM335,101h1v1h-1zM6,281h1v1h-1zM412,355h1v1h-1zM707,255h1v1h-1zM358,322h1v1h-1zM603,314h1v1h-1zM290,382h1v1h-1zM548,383h1v1h-1zM104,132h1v1h-1zM726,181h1v1h-1zM454,102h1v1h-1zM111,186h1v1h-1zM726,86h1v1h-1zM103,196h1v1h-1zM364,318h1v1h-1zM132,323h1v1h-1zM572,262h1v1h-1zM336,38h1v1h-1zM396,341h1v1h-1zM27,341h1v1h-1zM107,72h1v1h-1zM308,330h1v1h-1zM579,266h1v1h-1zM349,46h1v1h-1zM435,193h1v1h-1zM161,101h1v1h-1zM644,377h1v1h-1zM40,212h1v1h-1zM494,257h1v1h-1zM332,69h1v1h-1zM89,219h1v1h-1zM237,273h1v1h-1zM476,236h1v1h-1zM131,211h1v1h-1zM109,182h1v1h-1zM623,289h1v1h-1zM117,188h1v1h-1zM35,131h1v1h-1zM149,304h1v1h-1zM731,104h1v1h-1zM323,207h1v1h-1zM350,327h1v1h-1zM210,335h1v1h-1zM139,173h1v1h-1zM601,267h1v1h-1zM269,251h1v1h-1zM42,230h1v1h-1zM307,341h1v1h-1zM268,343h1v1h-1zM407,189h1v1h-1zM494,153h1v1h-1zM421,87h1v1h-1zM621,319h1v1h-1zM153,171h1v1h-1zM206,198h1v1h-1zM204,72h1v1h-1zM464,91h1v1h-1zM373,286h1v1h-1zM215,248h1v1h-1zM311,257h1v1h-1zM46,223h1v1h-1zM155,409h1v1h-1zM133,239h1v1h-1zM59,139h1v1h-1zM176,63h1v1h-1zM366,181h1v1h-1zM693,264h1v1h-1zM400,270h1v1h-1zM560,281h1v1h-1z" fill="#6a6a60"/>
<path d="M83,329h1v1h-1zM400,289h1v1h-1zM440,316h1v1h-1zM696,321h1v1h-1zM403,88h1v1h-1zM485,97h1v1h-1zM88,404h1v1h-1zM224,83h1v1h-1zM526,278h1v1h-1zM672,288h1v1h-1zM470,129h1v1h-1zM369,88h1v1h-1zM665,270h1v1h-1zM136,41h1v1h-1zM720,221h1v1h-1zM403,47h1v1h-1zM259,225h1v1h-1zM603,74h1v1h-1zM50,316h1v1h-1zM319,46h1v1h-1zM641,163h1v1h-1zM560,161h1v1h-1zM83,166h1v1h-1zM53,398h1v1h-1zM80,178h1v1h-1zM239,89h1v1h-1zM610,75h1v1h-1zM507,315h1v1h-1zM659,135h1v1h-1zM633,285h1v1h-1zM440,222h1v1h-1zM467,108h1v1h-1zM489,401h1v1h-1zM163,202h1v1h-1zM295,62h1v1h-1zM643,202h1v1h-1zM438,314h1v1h-1zM100,249h1v1h-1zM467,312h1v1h-1zM534,210h1v1h-1zM57,164h1v1h-1zM62,41h1v1h-1zM111,149h1v1h-1zM309,199h1v1h-1zM338,83h1v1h-1zM147,52h1v1h-1zM457,69h1v1h-1zM383,89h1v1h-1zM267,178h1v1h-1zM399,98h1v1h-1zM449,111h1v1h-1zM502,90h1v1h-1zM539,181h1v1h-1zM654,287h1v1h-1zM21,150h1v1h-1zM450,371h1v1h-1zM563,334h1v1h-1zM744,385h1v1h-1zM101,244h1v1h-1zM192,250h1v1h-1zM651,405h1v1h-1zM357,133h1v1h-1zM20,62h1v1h-1zM507,69h1v1h-1zM567,160h1v1h-1zM679,388h1v1h-1zM577,170h1v1h-1zM51,145h1v1h-1zM167,105h1v1h-1zM368,306h1v1h-1zM417,382h1v1h-1zM641,404h1v1h-1zM7,378h1v1h-1zM20,146h1v1h-1zM135,164h1v1h-1zM516,339h1v1h-1zM408,251h1v1h-1zM392,112h1v1h-1zM678,302h1v1h-1zM6,383h1v1h-1zM261,158h1v1h-1zM622,166h1v1h-1zM456,229h1v1h-1zM717,258h1v1h-1zM180,68h1v1h-1zM549,368h1v1h-1zM732,140h1v1h-1zM176,205h1v1h-1zM109,157h1v1h-1zM696,337h1v1h-1zM468,322h1v1h-1zM58,384h1v1h-1zM26,250h1v1h-1zM587,376h1v1h-1zM124,201h1v1h-1zM109,113h1v1h-1zM0,54h1v1h-1zM709,341h1v1h-1zM375,67h1v1h-1zM679,310h1v1h-1zM182,86h1v1h-1zM393,222h1v1h-1zM195,69h1v1h-1zM323,143h1v1h-1zM748,102h1v1h-1zM550,366h1v1h-1zM716,151h1v1h-1zM486,322h1v1h-1zM115,53h1v1h-1zM127,293h1v1h-1zM729,382h1v1h-1zM348,115h1v1h-1zM27,350h1v1h-1zM318,151h1v1h-1zM711,357h1v1h-1zM123,257h1v1h-1zM49,322h1v1h-1zM745,374h1v1h-1zM593,349h1v1h-1zM265,294h1v1h-1zM35,145h1v1h-1zM454,143h1v1h-1zM320,384h1v1h-1zM113,173h1v1h-1zM580,329h1v1h-1zM603,233h1v1h-1zM214,256h1v1h-1zM129,107h1v1h-1zM734,94h1v1h-1zM561,66h1v1h-1zM312,152h1v1h-1zM233,94h1v1h-1zM479,41h1v1h-1zM613,275h1v1h-1zM297,312h1v1h-1zM563,308h1v1h-1zM410,142h1v1h-1zM97,382h1v1h-1zM81,385h1v1h-1zM9,41h1v1h-1zM745,139h1v1h-1zM498,262h1v1h-1zM72,105h1v1h-1zM552,271h1v1h-1zM679,356h1v1h-1zM536,263h1v1h-1zM178,263h1v1h-1zM384,88h1v1h-1zM674,87h1v1h-1zM253,259h1v1h-1zM334,203h1v1h-1zM453,89h1v1h-1zM298,413h1v1h-1zM740,414h1v1h-1zM437,45h1v1h-1zM423,373h1v1h-1zM605,294h1v1h-1zM337,163h1v1h-1zM748,263h1v1h-1zM456,154h1v1h-1zM634,198h1v1h-1zM197,330h1v1h-1zM527,246h1v1h-1zM342,275h1v1h-1zM540,56h1v1h-1zM413,102h1v1h-1zM428,127h1v1h-1zM132,203h1v1h-1zM370,299h1v1h-1zM159,185h1v1h-1zM599,255h1v1h-1zM239,57h1v1h-1zM358,329h1v1h-1zM302,198h1v1h-1zM89,305h1v1h-1zM498,407h1v1h-1zM2,226h1v1h-1zM449,210h1v1h-1zM247,336h1v1h-1zM110,152h1v1h-1zM642,84h1v1h-1zM624,251h1v1h-1zM93,96h1v1h-1zM309,146h1v1h-1zM665,154h1v1h-1zM189,110h1v1h-1zM383,408h1v1h-1zM545,192h1v1h-1zM377,150h1v1h-1zM461,120h1v1h-1zM190,113h1v1h-1zM88,369h1v1h-1zM185,345h1v1h-1zM387,314h1v1h-1zM694,257h1v1h-1zM267,195h1v1h-1zM32,272h1v1h-1zM512,57h1v1h-1zM233,117h1v1h-1zM312,89h1v1h-1zM555,149h1v1h-1zM501,257h1v1h-1zM415,256h1v1h-1zM111,272h1v1h-1zM431,78h1v1h-1zM119,362h1v1h-1zM552,248h1v1h-1zM725,376h1v1h-1zM366,195h1v1h-1zM731,77h1v1h-1zM527,257h1v1h-1zM137,82h1v1h-1zM688,283h1v1h-1zM528,144h1v1h-1zM474,407h1v1h-1zM52,76h1v1h-1zM163,375h1v1h-1zM501,51h1v1h-1zM423,141h1v1h-1zM148,125h1v1h-1zM565,228h1v1h-1zM489,220h1v1h-1zM562,143h1v1h-1zM681,66h1v1h-1zM234,199h1v1h-1zM233,304h1v1h-1zM121,198h1v1h-1zM378,118h1v1h-1zM665,110h1v1h-1zM694,48h1v1h-1zM317,282h1v1h-1zM501,269h1v1h-1zM352,207h1v1h-1zM338,258h1v1h-1zM751,254h1v1h-1zM203,356h1v1h-1zM730,184h1v1h-1zM711,83h1v1h-1zM98,341h1v1h-1zM657,376h1v1h-1zM337,335h1v1h-1zM579,137h1v1h-1zM607,40h1v1h-1zM583,59h1v1h-1zM486,390h1v1h-1zM409,399h1v1h-1zM641,76h1v1h-1zM554,216h1v1h-1zM673,125h1v1h-1zM2,93h1v1h-1zM48,285h1v1h-1zM682,335h1v1h-1zM604,259h1v1h-1zM504,123h1v1h-1zM158,293h1v1h-1zM197,110h1v1h-1zM505,332h1v1h-1zM727,241h1v1h-1zM174,313h1v1h-1zM682,321h1v1h-1zM380,388h1v1h-1zM359,365h1v1h-1zM295,45h1v1h-1zM570,249h1v1h-1zM333,351h1v1h-1zM172,384h1v1h-1zM326,408h1v1h-1zM380,307h1v1h-1z" fill="#2c3034"/>
<path d="M350,112h1v1h-1zM294,101h1v1h-1zM362,269h1v1h-1zM469,260h1v1h-1zM185,173h1v1h-1zM108,372h1v1h-1zM147,239h1v1h-1zM194,226h1v1h-1zM308,282h1v1h-1zM583,138h1v1h-1zM393,239h1v1h-1zM198,290h1v1h-1zM365,193h1v1h-1zM319,325h1v1h-1zM433,93h1v1h-1zM258,309h1v1h-1zM658,294h1v1h-1zM53,171h1v1h-1zM294,351h1v1h-1zM248,255h1v1h-1zM670,202h1v1h-1zM361,376h1v1h-1zM408,405h1v1h-1zM121,250h1v1h-1zM260,335h1v1h-1zM457,84h1v1h-1zM286,353h1v1h-1zM671,185h1v1h-1zM566,37h1v1h-1zM535,286h1v1h-1zM691,402h1v1h-1zM276,411h1v1h-1zM88,248h1v1h-1zM341,357h1v1h-1zM109,325h1v1h-1zM32,347h1v1h-1zM380,319h1v1h-1zM162,389h1v1h-1zM651,211h1v1h-1zM61,151h1v1h-1zM424,208h1v1h-1zM522,210h1v1h-1zM240,357h1v1h-1zM686,153h1v1h-1zM56,316h1v1h-1zM679,187h1v1h-1zM40,297h1v1h-1zM688,208h1v1h-1zM191,394h1v1h-1zM221,384h1v1h-1zM565,411h1v1h-1zM664,78h1v1h-1zM548,275h1v1h-1zM134,366h1v1h-1zM219,407h1v1h-1zM569,361h1v1h-1zM221,323h1v1h-1zM295,124h1v1h-1zM364,211h1v1h-1zM692,381h1v1h-1zM52,113h1v1h-1zM468,158h1v1h-1zM76,89h1v1h-1zM167,307h1v1h-1zM265,414h1v1h-1zM746,209h1v1h-1zM259,293h1v1h-1zM684,108h1v1h-1zM453,79h1v1h-1zM424,396h1v1h-1zM587,247h1v1h-1zM320,326h1v1h-1zM27,69h1v1h-1zM55,253h1v1h-1zM410,248h1v1h-1zM447,379h1v1h-1zM39,365h1v1h-1zM397,245h1v1h-1zM281,126h1v1h-1zM721,126h1v1h-1zM661,399h1v1h-1zM243,97h1v1h-1zM609,341h1v1h-1zM188,278h1v1h-1zM412,372h1v1h-1zM661,168h1v1h-1zM31,44h1v1h-1zM347,191h1v1h-1zM330,54h1v1h-1zM27,83h1v1h-1zM12,231h1v1h-1zM6,81h1v1h-1zM655,291h1v1h-1zM305,261h1v1h-1zM610,400h1v1h-1zM2,379h1v1h-1zM152,115h1v1h-1zM489,400h1v1h-1zM131,77h1v1h-1zM253,263h1v1h-1zM622,35h1v1h-1zM316,56h1v1h-1zM643,343h1v1h-1zM205,323h1v1h-1zM407,260h1v1h-1zM496,318h1v1h-1zM107,73h1v1h-1zM671,46h1v1h-1zM563,109h1v1h-1zM570,216h1v1h-1zM85,72h1v1h-1zM647,157h1v1h-1zM311,170h1v1h-1zM587,120h1v1h-1zM719,58h1v1h-1zM134,400h1v1h-1zM115,50h1v1h-1zM535,237h1v1h-1zM252,60h1v1h-1zM633,379h1v1h-1zM366,207h1v1h-1zM390,173h1v1h-1zM283,353h1v1h-1zM480,148h1v1h-1zM342,334h1v1h-1zM537,73h1v1h-1zM599,74h1v1h-1zM701,315h1v1h-1zM417,215h1v1h-1zM53,131h1v1h-1zM77,205h1v1h-1zM290,221h1v1h-1zM670,46h1v1h-1zM179,134h1v1h-1zM484,385h1v1h-1zM630,129h1v1h-1zM398,62h1v1h-1zM366,147h1v1h-1zM621,380h1v1h-1zM661,187h1v1h-1zM95,186h1v1h-1zM517,271h1v1h-1zM560,254h1v1h-1zM466,211h1v1h-1zM342,103h1v1h-1zM341,403h1v1h-1zM19,255h1v1h-1zM331,222h1v1h-1zM43,223h1v1h-1zM166,96h1v1h-1zM190,401h1v1h-1zM298,200h1v1h-1zM118,95h1v1h-1zM552,149h1v1h-1zM121,163h1v1h-1z" fill="#4e6a74"/>
<path d="M70,82h1.5v1.5h-1.5zM723,255h1v1h-1zM518,265h1v1h-1zM726,277h1v1h-1zM431,290h1v1h-1zM651,219h1.5v1.5h-1.5zM539,147h1v1h-1zM346,137h1v1h-1zM298,90h1v1h-1zM479,217h1.5v1.5h-1.5zM342,288h1v1h-1zM248,261h1v1h-1zM729,186h1.5v1.5h-1.5zM155,375h1v1h-1zM179,88h1.5v1.5h-1.5zM605,99h1v1h-1zM184,351h1v1h-1zM560,268h1v1h-1zM596,179h1.5v1.5h-1.5zM163,88h1v1h-1zM89,139h1.5v1.5h-1.5zM44,132h1v1h-1zM342,131h1v1h-1zM677,386h1v1h-1zM746,136h1v1h-1zM352,45h1v1h-1zM381,325h1v1h-1zM530,209h1.5v1.5h-1.5zM25,234h1.5v1.5h-1.5zM178,201h1v1h-1zM459,170h1v1h-1zM742,189h1.5v1.5h-1.5zM449,262h1.5v1.5h-1.5zM383,268h1v1h-1zM484,198h1.5v1.5h-1.5zM720,300h1.5v1.5h-1.5zM220,286h1v1h-1zM629,69h1v1h-1zM483,47h1v1h-1zM610,85h1v1h-1zM631,242h1v1h-1zM323,129h1.5v1.5h-1.5zM126,327h1v1h-1zM64,392h1v1h-1zM199,82h1v1h-1zM240,291h1v1h-1zM184,124h1v1h-1zM180,76h1v1h-1zM98,190h1v1h-1zM142,40h1v1h-1zM92,238h1v1h-1zM187,405h1v1h-1zM90,250h1v1h-1zM183,188h1v1h-1zM9,56h1v1h-1zM2,112h1v1h-1zM58,349h1v1h-1zM38,192h1v1h-1zM47,83h1v1h-1zM57,184h1v1h-1zM183,99h1v1h-1zM88,336h1v1h-1zM75,367h1v1h-1zM170,71h1v1h-1zM168,90h1v1h-1zM231,414h1v1h-1zM171,187h1v1h-1zM212,319h1v1h-1zM33,271h1v1h-1z" fill="#c0c0b0"/>
<path d="M680,68h1v1h-1zM291,401h1v1h-1zM210,305h1v1h-1zM204,300h1v1h-1zM134,45h1v1h-1zM429,102h1v1h-1zM176,107h1v1h-1zM123,319h1v1h-1zM517,345h1v1h-1zM91,177h1v1h-1zM636,101h1v1h-1zM441,118h1v1h-1zM737,288h1v1h-1zM87,50h1v1h-1zM675,304h1v1h-1zM697,265h1v1h-1zM128,386h1v1h-1zM158,112h1v1h-1zM379,151h1v1h-1zM346,402h1v1h-1zM163,161h1v1h-1zM494,196h1v1h-1zM126,111h1v1h-1zM651,101h1v1h-1zM226,111h1v1h-1zM135,285h1v1h-1zM65,361h1v1h-1zM307,355h1v1h-1zM447,273h1v1h-1zM510,119h1v1h-1zM404,79h1v1h-1zM447,390h1v1h-1zM618,412h1v1h-1zM442,195h1v1h-1zM70,359h1v1h-1zM739,178h1v1h-1zM412,308h1v1h-1zM476,226h1v1h-1zM21,347h1v1h-1zM422,315h1v1h-1zM437,37h1v1h-1zM132,276h1v1h-1zM582,159h1v1h-1zM191,60h1v1h-1zM299,178h1v1h-1zM238,363h1v1h-1zM603,337h1v1h-1zM330,154h1v1h-1zM374,108h1v1h-1zM179,140h1v1h-1zM207,40h1v1h-1zM332,299h1v1h-1zM332,256h1v1h-1zM294,92h1v1h-1zM665,232h1v1h-1zM345,377h1v1h-1zM463,389h1v1h-1zM617,89h1v1h-1zM10,36h1v1h-1zM546,232h1v1h-1zM231,182h1v1h-1zM283,125h1v1h-1zM254,240h1v1h-1zM623,410h1v1h-1zM668,160h1v1h-1zM303,223h1v1h-1zM431,223h1v1h-1zM48,225h1v1h-1zM335,343h1v1h-1zM248,165h1v1h-1zM602,163h1v1h-1zM46,358h1v1h-1zM732,242h1v1h-1zM600,68h1v1h-1zM168,355h1v1h-1zM663,85h1v1h-1zM5,131h1v1h-1zM217,199h1v1h-1zM541,49h1v1h-1zM31,163h1v1h-1zM689,123h1v1h-1zM438,97h1v1h-1zM456,390h1v1h-1zM728,332h1v1h-1zM374,209h1v1h-1zM606,347h1v1h-1zM610,289h1v1h-1zM361,74h1v1h-1zM751,118h1v1h-1zM92,204h1v1h-1zM302,220h1v1h-1zM78,175h1v1h-1zM544,411h1v1h-1zM295,103h1v1h-1zM695,102h1v1h-1zM434,226h1v1h-1zM363,191h1v1h-1zM481,121h1v1h-1zM509,341h1v1h-1zM80,73h1v1h-1zM733,408h1v1h-1zM166,261h1v1h-1zM164,143h1v1h-1zM13,400h1v1h-1zM214,363h1v1h-1zM133,216h1v1h-1zM180,105h1v1h-1zM269,38h1v1h-1zM73,295h1v1h-1zM678,219h1v1h-1zM488,226h1v1h-1zM584,230h1v1h-1zM717,414h1v1h-1zM66,342h1v1h-1zM177,152h1v1h-1zM596,145h1v1h-1zM525,183h1v1h-1zM488,399h1v1h-1zM380,308h1v1h-1zM261,297h1v1h-1zM12,381h1v1h-1zM488,228h1v1h-1zM495,263h1v1h-1zM618,64h1v1h-1zM443,115h1v1h-1zM574,119h1v1h-1zM145,198h1v1h-1zM173,154h1v1h-1zM751,252h1v1h-1zM745,279h1v1h-1zM634,187h1v1h-1zM678,411h1v1h-1zM397,69h1v1h-1zM294,288h1v1h-1zM127,54h1v1h-1zM179,387h1v1h-1zM620,257h1v1h-1zM99,53h1v1h-1zM658,197h1v1h-1zM701,391h1v1h-1zM691,231h1v1h-1zM522,242h1v1h-1zM203,243h1v1h-1zM592,403h1v1h-1zM515,46h1v1h-1zM383,299h1v1h-1zM262,282h1v1h-1zM161,215h1v1h-1zM341,335h1v1h-1zM227,240h1v1h-1zM710,130h1v1h-1zM626,354h1v1h-1zM186,138h1v1h-1zM96,170h1v1h-1zM521,111h1v1h-1zM134,188h1v1h-1zM344,69h1v1h-1zM408,271h1v1h-1zM701,252h1v1h-1zM477,41h1v1h-1zM39,205h1v1h-1zM214,104h1v1h-1zM516,341h1v1h-1zM638,410h1v1h-1zM85,99h1v1h-1zM404,87h1v1h-1zM385,363h1v1h-1zM647,122h1v1h-1zM688,175h1v1h-1zM308,290h1v1h-1zM225,187h1v1h-1zM509,141h1v1h-1zM22,84h1v1h-1zM553,57h1v1h-1zM215,260h1v1h-1zM592,322h1v1h-1zM92,260h1v1h-1zM745,403h1v1h-1zM700,176h1v1h-1zM264,305h1v1h-1zM418,367h1v1h-1zM551,85h1v1h-1zM728,390h1v1h-1zM243,61h1v1h-1zM409,199h1v1h-1zM729,99h1v1h-1zM689,322h1v1h-1zM603,67h1v1h-1zM458,129h1v1h-1zM515,288h1v1h-1zM533,216h1v1h-1zM89,235h1v1h-1zM504,311h1v1h-1zM152,199h1v1h-1zM635,254h1v1h-1zM71,62h1v1h-1zM149,308h1v1h-1zM504,73h1v1h-1zM70,201h1v1h-1zM140,395h1v1h-1zM685,286h1v1h-1zM622,371h1v1h-1zM32,296h1v1h-1zM564,57h1v1h-1zM92,299h1v1h-1zM278,296h1v1h-1zM115,373h1v1h-1zM460,376h1v1h-1zM667,387h1v1h-1zM44,383h1v1h-1zM751,194h1v1h-1zM512,197h1v1h-1zM43,54h1v1h-1zM202,164h1v1h-1zM128,78h1v1h-1zM100,233h1v1h-1zM305,63h1v1h-1zM185,230h1v1h-1zM498,250h1v1h-1zM696,286h1v1h-1zM19,156h1v1h-1zM96,181h1v1h-1zM349,67h1v1h-1zM351,152h1v1h-1zM237,221h1v1h-1zM698,71h1v1h-1zM633,186h1v1h-1zM499,234h1v1h-1zM49,312h1v1h-1zM507,163h1v1h-1zM461,396h1v1h-1zM173,193h1v1h-1zM640,177h1v1h-1zM457,293h1v1h-1zM744,55h1v1h-1zM617,60h1v1h-1zM690,333h1v1h-1zM664,216h1v1h-1zM242,254h1v1h-1zM558,134h1v1h-1zM398,272h1v1h-1zM164,239h1v1h-1zM191,250h1v1h-1zM535,408h1v1h-1zM60,328h1v1h-1zM691,178h1v1h-1zM338,111h1v1h-1zM737,313h1v1h-1zM448,94h1v1h-1zM558,258h1v1h-1zM213,180h1v1h-1zM534,311h1v1h-1zM684,281h1v1h-1zM294,156h1v1h-1zM430,101h1v1h-1zM302,389h1v1h-1zM476,332h1v1h-1zM734,314h1v1h-1zM164,343h1v1h-1zM239,293h1v1h-1zM31,133h1v1h-1zM346,128h1v1h-1zM578,247h1v1h-1zM691,132h1v1h-1z" fill="#38383a"/>
<path d="M355,46h1v1h-1zM457,405h1v1h-1zM244,91h1v1h-1zM343,390h1.5v1.5h-1.5zM702,302h1.5v1.5h-1.5zM125,408h1.5v1.5h-1.5zM607,346h1v1h-1zM6,130h1.5v1.5h-1.5zM352,134h1v1h-1zM446,88h1v1h-1zM378,94h1.5v1.5h-1.5zM209,194h1v1h-1zM629,37h1v1h-1zM451,194h1v1h-1zM233,229h1v1h-1zM603,110h1v1h-1zM612,162h1v1h-1zM547,167h1.5v1.5h-1.5zM26,73h1.5v1.5h-1.5zM206,37h1.5v1.5h-1.5zM10,74h1.5v1.5h-1.5zM368,286h1.5v1.5h-1.5zM277,279h1.5v1.5h-1.5zM132,133h1.5v1.5h-1.5zM728,253h1v1h-1zM606,404h1v1h-1zM3,411h1.5v1.5h-1.5zM396,296h1v1h-1zM586,346h1v1h-1zM548,198h1v1h-1zM712,165h1.5v1.5h-1.5zM337,270h1.5v1.5h-1.5zM155,246h1v1h-1zM0,114h1v1h-1zM47,46h1.5v1.5h-1.5zM329,387h1v1h-1zM557,132h1v1h-1zM22,255h1.5v1.5h-1.5zM61,67h1v1h-1zM243,380h1v1h-1zM138,257h1v1h-1zM108,186h1v1h-1zM201,400h1v1h-1zM193,295h1v1h-1zM19,68h1v1h-1zM171,53h1v1h-1zM21,180h1v1h-1zM125,271h1v1h-1zM40,69h1v1h-1zM3,75h1v1h-1zM145,228h1v1h-1zM126,383h1v1h-1zM174,242h1v1h-1zM59,85h1v1h-1zM70,306h1v1h-1zM13,148h1v1h-1z" fill="#b0a090"/>
<path d="M674,154h1v1h-1zM337,360h1v1h-1zM283,266h1v1h-1zM271,174h1v1h-1zM688,126h1v1h-1zM671,137h1v1h-1zM633,364h1v1h-1zM501,170h1v1h-1zM292,272h1v1h-1zM123,204h1v1h-1zM749,245h1v1h-1zM31,358h1v1h-1zM282,187h1v1h-1zM135,289h1v1h-1zM335,198h1v1h-1zM519,304h1v1h-1zM104,37h1v1h-1zM68,90h1v1h-1zM134,286h1v1h-1zM591,109h1v1h-1zM486,116h1v1h-1zM243,116h1v1h-1zM336,342h1v1h-1zM604,221h1v1h-1zM546,375h1v1h-1zM208,92h1v1h-1zM488,86h1v1h-1zM328,343h1v1h-1zM506,338h1v1h-1zM173,272h1v1h-1zM519,133h1v1h-1zM34,41h1v1h-1zM217,119h1v1h-1zM510,119h1v1h-1zM640,99h1v1h-1zM674,222h1v1h-1zM111,38h1v1h-1zM509,325h1v1h-1zM693,120h1v1h-1zM427,279h1v1h-1zM396,385h1v1h-1zM585,110h1v1h-1zM496,230h1v1h-1zM470,311h1v1h-1zM217,133h1v1h-1zM96,52h1v1h-1zM722,269h1v1h-1zM518,236h1v1h-1zM57,86h1v1h-1zM523,106h1v1h-1zM530,212h1v1h-1zM398,390h1v1h-1zM371,208h1v1h-1zM422,87h1v1h-1zM585,111h1v1h-1zM90,204h1v1h-1zM646,115h1v1h-1zM63,367h1v1h-1zM601,123h1v1h-1zM285,375h1v1h-1zM201,173h1v1h-1zM130,319h1v1h-1zM694,297h1v1h-1zM408,179h1v1h-1zM250,383h1v1h-1zM438,379h1v1h-1zM46,40h1v1h-1zM538,384h1v1h-1zM64,259h1v1h-1zM365,404h1v1h-1zM154,284h1v1h-1zM144,383h1v1h-1zM349,413h1v1h-1zM345,378h1v1h-1zM282,166h1v1h-1zM695,207h1v1h-1zM32,366h1v1h-1zM154,356h1v1h-1zM90,204h1v1h-1zM214,411h1v1h-1zM201,295h1v1h-1zM203,374h1v1h-1zM627,170h1v1h-1zM329,230h1v1h-1zM206,100h1v1h-1zM220,323h1v1h-1zM331,53h1v1h-1zM501,213h1v1h-1zM206,106h1v1h-1zM310,210h1v1h-1zM688,289h1v1h-1zM371,120h1v1h-1zM518,345h1v1h-1zM370,236h1v1h-1zM322,57h1v1h-1zM569,141h1v1h-1zM749,406h1v1h-1zM89,408h1v1h-1zM663,143h1v1h-1zM245,302h1v1h-1zM741,76h1v1h-1zM197,275h1v1h-1zM467,173h1v1h-1zM455,278h1v1h-1zM67,335h1v1h-1zM161,66h1v1h-1zM30,136h1v1h-1zM447,282h1v1h-1zM322,351h1v1h-1zM307,371h1v1h-1zM173,157h1v1h-1zM198,286h1v1h-1zM473,362h1v1h-1zM527,217h1v1h-1zM221,313h1v1h-1zM586,315h1v1h-1zM148,355h1v1h-1zM20,214h1v1h-1zM578,168h1v1h-1zM661,37h1v1h-1zM281,77h1v1h-1zM721,37h1v1h-1zM484,95h1v1h-1zM26,79h1v1h-1zM167,149h1v1h-1zM237,369h1v1h-1zM466,357h1v1h-1zM242,37h1v1h-1zM202,70h1v1h-1zM433,192h1v1h-1zM601,58h1v1h-1zM300,85h1v1h-1zM246,154h1v1h-1zM415,167h1v1h-1zM524,407h1v1h-1zM229,83h1v1h-1zM592,146h1v1h-1zM1,189h1v1h-1zM717,122h1v1h-1zM450,365h1v1h-1zM472,149h1v1h-1zM207,113h1v1h-1zM585,390h1v1h-1zM377,93h1v1h-1zM516,79h1v1h-1zM339,192h1v1h-1zM519,108h1v1h-1zM448,359h1v1h-1zM692,325h1v1h-1zM711,391h1v1h-1zM184,117h1v1h-1zM333,262h1v1h-1zM131,182h1v1h-1zM162,63h1v1h-1zM80,145h1v1h-1zM80,284h1v1h-1zM713,228h1v1h-1zM749,181h1v1h-1zM346,238h1v1h-1zM393,271h1v1h-1zM414,391h1v1h-1zM374,93h1v1h-1zM179,361h1v1h-1zM557,209h1v1h-1zM131,190h1v1h-1zM565,157h1v1h-1zM351,368h1v1h-1zM672,255h1v1h-1zM242,113h1v1h-1zM490,177h1v1h-1zM86,47h1v1h-1zM588,64h1v1h-1zM717,115h1v1h-1zM146,139h1v1h-1zM647,99h1v1h-1zM320,327h1v1h-1zM452,37h1v1h-1zM114,406h1v1h-1zM275,211h1v1h-1zM468,371h1v1h-1zM587,187h1v1h-1zM390,245h1v1h-1zM542,129h1v1h-1zM80,279h1v1h-1zM154,289h1v1h-1zM340,215h1v1h-1zM109,182h1v1h-1zM119,146h1v1h-1zM558,119h1v1h-1zM660,79h1v1h-1zM372,371h1v1h-1zM558,202h1v1h-1zM677,209h1v1h-1zM590,368h1v1h-1zM210,217h1v1h-1zM540,177h1v1h-1zM164,40h1v1h-1zM713,63h1v1h-1zM465,111h1v1h-1zM423,89h1v1h-1zM707,209h1v1h-1zM740,336h1v1h-1zM123,221h1v1h-1zM604,340h1v1h-1zM327,390h1v1h-1zM335,176h1v1h-1zM192,124h1v1h-1zM636,189h1v1h-1zM194,81h1v1h-1zM202,283h1v1h-1zM698,256h1v1h-1zM744,325h1v1h-1zM704,198h1v1h-1zM672,396h1v1h-1zM317,232h1v1h-1zM387,122h1v1h-1zM374,335h1v1h-1zM318,406h1v1h-1zM350,304h1v1h-1zM689,379h1v1h-1zM215,77h1v1h-1zM93,236h1v1h-1zM50,403h1v1h-1zM224,49h1v1h-1zM107,222h1v1h-1zM322,230h1v1h-1zM682,83h1v1h-1zM466,62h1v1h-1zM53,251h1v1h-1zM533,303h1v1h-1zM472,97h1v1h-1zM592,400h1v1h-1zM65,242h1v1h-1zM744,370h1v1h-1zM423,383h1v1h-1zM450,122h1v1h-1zM608,358h1v1h-1zM96,392h1v1h-1zM333,397h1v1h-1zM286,339h1v1h-1zM653,122h1v1h-1zM661,113h1v1h-1zM268,316h1v1h-1zM632,311h1v1h-1zM734,58h1v1h-1z" fill="#2e3438"/>
<path d="M579,198h1.5v1.5h-1.5zM549,86h1v1h-1zM649,164h1v1h-1zM489,294h1v1h-1zM317,362h1.5v1.5h-1.5zM645,389h1v1h-1zM551,352h1.5v1.5h-1.5zM213,187h1v1h-1zM644,361h1v1h-1zM748,115h1.5v1.5h-1.5zM640,114h1.5v1.5h-1.5zM441,267h1v1h-1zM727,177h1v1h-1zM687,254h1v1h-1zM112,65h1v1h-1zM503,379h1v1h-1zM596,267h1.5v1.5h-1.5zM484,150h1v1h-1zM33,258h1.5v1.5h-1.5zM476,166h1v1h-1zM192,234h1v1h-1zM735,408h1v1h-1zM569,398h1v1h-1zM460,155h1v1h-1zM566,219h1v1h-1zM555,329h1.5v1.5h-1.5zM685,164h1.5v1.5h-1.5zM750,82h1v1h-1zM8,304h1.5v1.5h-1.5zM59,375h1v1h-1zM100,51h1v1h-1zM232,289h1v1h-1zM140,262h1v1h-1zM103,129h1v1h-1zM163,317h1v1h-1zM41,182h1v1h-1zM54,87h1v1h-1zM108,272h1v1h-1zM19,351h1v1h-1zM160,71h1v1h-1zM162,53h1v1h-1zM20,319h1v1h-1zM20,86h1v1h-1zM138,288h1v1h-1zM120,203h1v1h-1zM128,289h1v1h-1zM206,54h1v1h-1zM30,165h1v1h-1zM102,235h1v1h-1z" fill="#a8b8c0"/>
<path d="M658,78h1v1h-1zM530,306h1v1h-1zM339,299h1v1h-1zM85,346h1v1h-1zM71,292h1v1h-1zM122,120h1v1h-1zM460,399h1v1h-1zM164,253h1v1h-1zM690,155h1v1h-1zM533,331h1v1h-1zM267,153h1v1h-1zM217,235h1v1h-1zM713,69h1v1h-1zM82,286h1v1h-1zM200,90h1v1h-1zM202,288h1v1h-1zM449,378h1v1h-1zM641,379h1v1h-1zM730,390h1v1h-1zM15,368h1v1h-1zM65,341h1v1h-1zM364,301h1v1h-1zM535,157h1v1h-1zM450,216h1v1h-1zM643,85h1v1h-1zM159,158h1v1h-1zM217,99h1v1h-1zM328,131h1v1h-1zM197,68h1v1h-1zM713,92h1v1h-1zM137,292h1v1h-1zM696,40h1v1h-1zM97,137h1v1h-1zM75,132h1v1h-1zM58,101h1v1h-1zM146,306h1v1h-1zM92,49h1v1h-1zM110,372h1v1h-1zM154,292h1v1h-1zM172,272h1v1h-1zM324,68h1v1h-1zM542,216h1v1h-1zM93,303h1v1h-1zM208,203h1v1h-1zM184,257h1v1h-1zM50,105h1v1h-1zM440,205h1v1h-1zM310,341h1v1h-1zM112,184h1v1h-1zM251,72h1v1h-1zM702,204h1v1h-1zM337,70h1v1h-1zM676,310h1v1h-1zM672,163h1v1h-1zM138,164h1v1h-1zM405,306h1v1h-1zM694,246h1v1h-1zM314,119h1v1h-1zM96,219h1v1h-1zM368,46h1v1h-1zM40,310h1v1h-1zM195,209h1v1h-1zM28,39h1v1h-1zM363,230h1v1h-1zM708,276h1v1h-1zM490,88h1v1h-1zM569,366h1v1h-1zM531,388h1v1h-1zM658,414h1v1h-1zM470,319h1v1h-1zM679,369h1v1h-1zM536,166h1v1h-1zM318,71h1v1h-1zM587,89h1v1h-1zM371,372h1v1h-1zM332,362h1v1h-1zM270,97h1v1h-1zM147,317h1v1h-1zM726,160h1v1h-1zM718,149h1v1h-1zM388,40h1v1h-1zM333,299h1v1h-1zM140,203h1v1h-1zM60,369h1v1h-1zM472,329h1v1h-1zM118,81h1v1h-1zM600,260h1v1h-1zM48,323h1v1h-1zM281,361h1v1h-1zM98,188h1v1h-1zM101,271h1v1h-1zM333,349h1v1h-1zM406,315h1v1h-1zM53,244h1v1h-1zM745,135h1v1h-1zM137,160h1v1h-1zM445,249h1v1h-1zM61,252h1v1h-1zM693,391h1v1h-1zM183,330h1v1h-1zM96,309h1v1h-1zM277,224h1v1h-1zM321,147h1v1h-1zM97,339h1v1h-1zM14,347h1v1h-1zM358,390h1v1h-1zM480,148h1v1h-1zM182,284h1v1h-1zM215,275h1v1h-1zM72,95h1v1h-1zM335,82h1v1h-1zM484,159h1v1h-1zM270,142h1v1h-1zM227,126h1v1h-1zM33,332h1v1h-1zM697,270h1v1h-1zM353,98h1v1h-1zM212,302h1v1h-1zM570,366h1v1h-1zM99,306h1v1h-1zM169,140h1v1h-1zM572,154h1v1h-1zM526,279h1v1h-1zM8,408h1v1h-1zM728,197h1v1h-1zM81,42h1v1h-1zM385,177h1v1h-1zM428,405h1v1h-1zM521,338h1v1h-1zM316,215h1v1h-1zM558,401h1v1h-1zM612,242h1v1h-1zM646,320h1v1h-1zM290,334h1v1h-1zM714,56h1v1h-1zM505,334h1v1h-1zM44,252h1v1h-1zM67,175h1v1h-1zM210,309h1v1h-1zM193,264h1v1h-1zM127,319h1v1h-1zM150,342h1v1h-1zM120,199h1v1h-1zM225,51h1v1h-1zM13,239h1v1h-1zM405,363h1v1h-1zM386,211h1v1h-1zM101,164h1v1h-1zM101,400h1v1h-1zM187,395h1v1h-1zM663,100h1v1h-1zM377,293h1v1h-1zM507,276h1v1h-1zM536,183h1v1h-1zM113,137h1v1h-1zM62,267h1v1h-1zM581,371h1v1h-1zM215,349h1v1h-1zM253,366h1v1h-1zM15,221h1v1h-1zM55,370h1v1h-1zM46,207h1v1h-1zM267,124h1v1h-1zM227,246h1v1h-1zM4,233h1v1h-1z" fill="#5e5648"/>
<path d="M115,152h1v1h-1zM609,359h1v1h-1zM45,139h1.5v1.5h-1.5zM26,68h1v1h-1zM39,166h1.5v1.5h-1.5zM116,113h1.5v1.5h-1.5zM406,119h1.5v1.5h-1.5zM540,334h1.5v1.5h-1.5zM577,369h1v1h-1zM597,106h1.5v1.5h-1.5zM544,370h1v1h-1zM349,166h1.5v1.5h-1.5zM332,154h1v1h-1zM248,269h1v1h-1zM623,129h1.5v1.5h-1.5zM272,60h1v1h-1zM42,148h1v1h-1zM556,133h1v1h-1zM381,328h1.5v1.5h-1.5zM261,372h1v1h-1zM744,67h1.5v1.5h-1.5zM213,206h1.5v1.5h-1.5zM190,70h1v1h-1zM312,166h1v1h-1zM448,217h1.5v1.5h-1.5zM464,322h1v1h-1zM52,197h1v1h-1zM40,166h1.5v1.5h-1.5zM37,283h1v1h-1zM370,74h1v1h-1zM134,187h1v1h-1zM359,162h1v1h-1zM189,405h1v1h-1zM215,286h1v1h-1zM119,45h1v1h-1zM147,413h1v1h-1zM102,291h1v1h-1zM51,403h1v1h-1zM7,139h1v1h-1zM166,119h1v1h-1zM87,331h1v1h-1zM166,406h1v1h-1zM159,67h1v1h-1zM31,378h1v1h-1zM75,304h1v1h-1zM110,230h1v1h-1zM119,273h1v1h-1zM189,308h1v1h-1zM36,305h1v1h-1zM166,236h1v1h-1zM102,402h1v1h-1zM158,320h1v1h-1zM143,159h1v1h-1z" fill="#a0a090"/>
<path d="M414,212h1v1h-1zM86,334h1.5v1.5h-1.5zM536,169h1.5v1.5h-1.5zM218,47h1v1h-1zM126,322h1v1h-1zM645,154h1.5v1.5h-1.5zM264,408h1.5v1.5h-1.5zM608,338h1v1h-1zM119,220h1.5v1.5h-1.5zM598,254h1v1h-1zM163,224h1v1h-1zM442,168h1v1h-1zM58,406h1.5v1.5h-1.5zM533,150h1v1h-1zM622,159h1v1h-1zM510,145h1v1h-1zM388,242h1.5v1.5h-1.5zM392,219h1v1h-1zM12,219h1v1h-1zM738,160h1v1h-1zM366,379h1v1h-1zM195,172h1.5v1.5h-1.5zM376,229h1v1h-1zM202,313h1v1h-1zM321,113h1.5v1.5h-1.5zM528,223h1v1h-1zM101,43h1v1h-1zM404,41h1v1h-1zM91,361h1v1h-1zM413,278h1v1h-1zM207,207h1.5v1.5h-1.5zM75,92h1v1h-1zM505,308h1v1h-1zM573,311h1.5v1.5h-1.5zM85,251h1v1h-1zM513,97h1v1h-1zM70,383h1v1h-1zM505,66h1v1h-1zM625,298h1v1h-1zM454,186h1v1h-1zM255,321h1.5v1.5h-1.5zM488,222h1v1h-1zM477,339h1.5v1.5h-1.5zM746,307h1v1h-1zM641,156h1v1h-1zM163,246h1v1h-1zM154,364h1v1h-1zM484,203h1.5v1.5h-1.5zM19,207h1v1h-1zM474,303h1.5v1.5h-1.5zM57,318h1v1h-1zM227,311h1v1h-1zM3,113h1v1h-1zM47,371h1v1h-1zM158,149h1v1h-1zM94,37h1v1h-1zM162,327h1v1h-1zM122,217h1v1h-1zM149,400h1v1h-1zM60,112h1v1h-1zM214,304h1v1h-1zM23,266h1v1h-1zM94,348h1v1h-1zM45,163h1v1h-1zM202,342h1v1h-1zM65,132h1v1h-1zM98,114h1v1h-1z" fill="#90b0b8"/>
<path d="M59,292h1v1h-1zM157,363h1v1h-1zM61,351h1v1h-1zM143,246h1v1h-1zM205,49h1v1h-1zM40,197h1v1h-1zM116,121h1v1h-1zM2,98h1v1h-1zM166,328h1v1h-1zM260,284h1v1h-1zM196,282h1v1h-1zM19,279h1v1h-1zM227,335h1v1h-1zM46,197h1v1h-1zM150,41h1v1h-1zM85,412h1v1h-1zM110,254h1v1h-1zM243,376h1v1h-1zM26,334h1v1h-1zM112,134h1v1h-1zM109,309h1v1h-1zM52,159h1v1h-1zM251,338h1v1h-1zM144,152h1v1h-1zM81,244h1v1h-1zM166,231h1v1h-1zM52,75h1v1h-1zM80,85h1v1h-1zM130,284h1v1h-1zM8,154h1v1h-1zM16,175h1v1h-1zM132,65h1v1h-1zM99,269h1v1h-1zM84,156h1v1h-1zM95,414h1v1h-1zM150,221h1v1h-1zM61,366h1v1h-1zM168,320h1v1h-1zM197,59h1v1h-1zM96,233h1v1h-1zM27,148h1v1h-1zM48,336h1v1h-1zM137,221h1v1h-1zM174,315h1v1h-1zM77,64h1v1h-1zM74,122h1v1h-1zM45,93h1v1h-1zM123,405h1v1h-1zM175,335h1v1h-1zM53,374h1v1h-1zM116,381h1v1h-1zM70,166h1v1h-1zM14,319h1v1h-1zM182,309h1v1h-1zM76,353h1v1h-1zM194,375h1v1h-1zM157,247h1v1h-1zM253,329h1v1h-1zM47,219h1v1h-1zM179,232h1v1h-1zM160,236h1v1h-1zM158,125h1v1h-1zM165,412h1v1h-1zM210,343h1v1h-1zM182,191h1v1h-1zM132,194h1v1h-1zM160,347h1v1h-1zM87,252h1v1h-1zM178,166h1v1h-1zM66,347h1v1h-1zM145,101h1v1h-1zM40,291h1v1h-1zM197,409h1v1h-1zM185,97h1v1h-1zM207,74h1v1h-1zM116,375h1v1h-1zM85,231h1v1h-1zM32,123h1v1h-1zM196,218h1v1h-1zM207,63h1v1h-1zM60,98h1v1h-1zM23,138h1v1h-1zM87,261h1v1h-1zM89,275h1v1h-1zM35,266h1v1h-1zM31,217h1v1h-1zM38,384h1v1h-1zM89,235h1v1h-1zM93,169h1v1h-1zM205,276h1v1h-1zM30,175h1v1h-1zM185,358h1v1h-1zM194,170h1v1h-1zM12,167h1v1h-1zM11,71h1v1h-1zM72,132h1v1h-1zM161,137h1v1h-1zM81,169h1v1h-1zM21,167h1v1h-1zM140,230h1v1h-1zM9,36h1v1h-1zM111,87h1v1h-1zM160,123h1v1h-1zM106,148h1v1h-1zM55,260h1v1h-1zM90,58h1v1h-1zM120,334h1v1h-1zM38,390h1v1h-1z" fill="#4a5a64"/>
<path d="M25,246h1v1h-1zM140,62h1v1h-1zM113,123h1v1h-1zM175,80h1v1h-1zM75,79h1v1h-1zM237,381h1v1h-1zM239,289h1v1h-1zM21,65h1v1h-1zM43,116h1v1h-1zM190,282h1v1h-1zM91,412h1v1h-1zM201,393h1v1h-1zM254,367h1v1h-1zM80,140h1v1h-1zM119,340h1v1h-1zM199,97h1v1h-1zM149,297h1v1h-1zM15,253h1v1h-1zM67,59h1v1h-1zM15,339h1v1h-1zM94,340h1v1h-1zM191,70h1v1h-1zM128,56h1v1h-1zM170,223h1v1h-1zM83,375h1v1h-1zM67,185h1v1h-1zM121,232h1v1h-1zM48,105h1v1h-1zM132,227h1v1h-1zM145,277h1v1h-1zM203,357h1v1h-1zM188,108h1v1h-1zM47,391h1v1h-1zM117,385h1v1h-1zM107,361h1v1h-1zM71,388h1v1h-1zM178,305h1v1h-1zM204,36h1v1h-1zM133,114h1v1h-1zM193,391h1v1h-1zM106,307h1v1h-1zM167,65h1v1h-1zM43,139h1v1h-1zM48,128h1v1h-1zM49,365h1v1h-1zM193,190h1v1h-1zM189,151h1v1h-1zM186,298h1v1h-1zM167,308h1v1h-1zM32,198h1v1h-1zM32,196h1v1h-1zM14,344h1v1h-1zM34,60h1v1h-1zM141,119h1v1h-1zM62,285h1v1h-1zM111,159h1v1h-1zM53,266h1v1h-1zM190,40h1v1h-1zM4,60h1v1h-1zM29,73h1v1h-1zM44,381h1v1h-1zM105,311h1v1h-1zM108,314h1v1h-1zM28,276h1v1h-1zM61,203h1v1h-1zM156,317h1v1h-1zM14,143h1v1h-1zM39,359h1v1h-1zM41,186h1v1h-1zM8,248h1v1h-1zM23,303h1v1h-1zM78,389h1v1h-1zM5,167h1v1h-1zM122,350h1v1h-1zM194,381h1v1h-1zM54,407h1v1h-1zM39,139h1v1h-1zM228,314h1v1h-1zM7,214h1v1h-1zM26,251h1v1h-1zM45,94h1v1h-1zM215,285h1v1h-1zM208,402h1v1h-1zM15,238h1v1h-1zM237,298h1v1h-1zM126,356h1v1h-1zM47,120h1v1h-1zM104,127h1v1h-1zM156,192h1v1h-1zM206,42h1v1h-1zM93,400h1v1h-1zM84,48h1v1h-1zM102,298h1v1h-1zM216,277h1v1h-1zM208,74h1v1h-1zM24,286h1v1h-1zM24,122h1v1h-1zM136,50h1v1h-1zM148,273h1v1h-1zM176,324h1v1h-1zM195,194h1v1h-1zM24,331h1v1h-1z" fill="#6a7070"/>
<path d="M72,334h1v1h-1zM43,119h1v1h-1zM198,70h1v1h-1zM130,221h1v1h-1zM119,41h1v1h-1zM55,294h1v1h-1zM28,373h1v1h-1zM173,78h1v1h-1zM24,110h1v1h-1zM152,220h1v1h-1zM171,213h1v1h-1zM187,282h1v1h-1zM93,62h1v1h-1zM196,300h1v1h-1zM200,392h1v1h-1zM51,392h1v1h-1zM248,291h1v1h-1zM146,120h1v1h-1zM217,380h1v1h-1zM183,341h1v1h-1zM145,337h1v1h-1zM74,255h1v1h-1zM104,206h1v1h-1zM170,283h1v1h-1zM5,233h1v1h-1zM122,139h1v1h-1zM36,299h1v1h-1zM123,67h1v1h-1zM232,284h1v1h-1zM240,384h1v1h-1zM75,275h1v1h-1zM208,336h1v1h-1zM38,206h1v1h-1zM63,253h1v1h-1zM125,393h1v1h-1zM91,86h1v1h-1zM22,296h1v1h-1zM182,306h1v1h-1zM131,309h1v1h-1zM36,367h1v1h-1zM178,346h1v1h-1zM231,377h1v1h-1zM38,171h1v1h-1zM17,133h1v1h-1zM238,377h1v1h-1zM57,199h1v1h-1zM187,414h1v1h-1zM172,167h1v1h-1zM63,359h1v1h-1zM62,277h1v1h-1zM51,165h1v1h-1zM52,390h1v1h-1zM17,40h1v1h-1zM124,46h1v1h-1zM124,144h1v1h-1zM157,393h1v1h-1zM136,273h1v1h-1zM162,64h1v1h-1zM47,94h1v1h-1zM88,183h1v1h-1zM212,285h1v1h-1zM47,278h1v1h-1zM23,73h1v1h-1zM117,263h1v1h-1zM128,358h1v1h-1zM150,347h1v1h-1zM10,149h1v1h-1zM37,371h1v1h-1zM183,61h1v1h-1zM21,86h1v1h-1zM178,168h1v1h-1zM25,356h1v1h-1zM149,285h1v1h-1zM2,218h1v1h-1zM187,207h1v1h-1zM124,223h1v1h-1zM177,129h1v1h-1zM74,141h1v1h-1zM69,397h1v1h-1zM61,281h1v1h-1zM127,378h1v1h-1zM184,201h1v1h-1zM160,216h1v1h-1zM21,242h1v1h-1zM196,353h1v1h-1zM193,91h1v1h-1zM149,124h1v1h-1zM165,61h1v1h-1zM136,414h1v1h-1zM63,350h1v1h-1zM2,237h1v1h-1zM89,134h1v1h-1zM178,120h1v1h-1zM111,253h1v1h-1zM43,123h1v1h-1zM158,277h1v1h-1zM96,88h1v1h-1zM108,250h1v1h-1zM39,301h1v1h-1zM116,188h1v1h-1zM67,336h1v1h-1zM139,41h1v1h-1zM73,404h1v1h-1zM64,199h1v1h-1zM161,161h1v1h-1zM35,362h1v1h-1zM230,301h1v1h-1zM78,227h1v1h-1zM4,121h1v1h-1zM236,330h1v1h-1zM17,243h1v1h-1zM173,312h1v1h-1zM149,331h1v1h-1zM80,399h1v1h-1zM169,144h1v1h-1zM225,400h1v1h-1zM165,356h1v1h-1zM106,219h1v1h-1zM250,359h1v1h-1zM155,113h1v1h-1zM147,124h1v1h-1zM29,178h1v1h-1zM182,282h1v1h-1zM131,51h1v1h-1zM27,237h1v1h-1zM150,137h1v1h-1zM80,301h1v1h-1zM54,311h1v1h-1zM187,274h1v1h-1zM256,330h1v1h-1zM72,323h1v1h-1zM87,106h1v1h-1zM148,260h1v1h-1zM146,36h1v1h-1zM151,321h1v1h-1zM83,122h1v1h-1zM100,320h1v1h-1zM181,329h1v1h-1zM161,209h1v1h-1zM227,307h1v1h-1zM93,339h1v1h-1zM108,53h1v1h-1zM85,312h1v1h-1zM141,130h1v1h-1zM191,39h1v1h-1zM67,335h1v1h-1zM162,188h1v1h-1zM3,210h1v1h-1zM138,258h1v1h-1zM93,326h1v1h-1zM76,204h1v1h-1zM88,329h1v1h-1zM34,161h1v1h-1zM165,97h1v1h-1zM142,327h1v1h-1zM107,187h1v1h-1zM151,103h1v1h-1zM36,349h1v1h-1zM154,57h1v1h-1zM97,295h1v1h-1zM60,306h1v1h-1zM158,93h1v1h-1zM49,240h1v1h-1zM78,296h1v1h-1zM218,295h1v1h-1zM185,264h1v1h-1zM244,358h1v1h-1zM19,129h1v1h-1zM196,280h1v1h-1zM15,42h1v1h-1zM119,280h1v1h-1zM149,282h1v1h-1zM271,307h1v1h-1zM171,213h1v1h-1zM58,139h1v1h-1zM117,242h1v1h-1zM113,182h1v1h-1zM21,231h1v1h-1zM193,299h1v1h-1zM116,382h1v1h-1zM160,273h1v1h-1zM160,209h1v1h-1zM15,255h1v1h-1zM222,348h1v1h-1zM81,191h1v1h-1zM178,228h1v1h-1zM53,167h1v1h-1zM24,243h1v1h-1zM106,261h1v1h-1zM124,310h1v1h-1zM27,220h1v1h-1zM137,381h1v1h-1zM146,263h1v1h-1zM220,329h1v1h-1zM124,72h1v1h-1zM72,154h1v1h-1zM109,410h1v1h-1zM121,118h1v1h-1zM213,351h1v1h-1zM141,267h1v1h-1zM252,357h1v1h-1zM161,291h1v1h-1zM109,276h1v1h-1zM176,228h1v1h-1zM85,282h1v1h-1zM55,359h1v1h-1zM168,272h1v1h-1zM73,141h1v1h-1zM92,199h1v1h-1zM48,66h1v1h-1zM87,279h1v1h-1zM254,369h1v1h-1zM142,122h1v1h-1zM173,172h1v1h-1zM53,288h1v1h-1zM162,208h1v1h-1zM191,321h1v1h-1zM35,367h1v1h-1zM191,278h1v1h-1zM117,244h1v1h-1zM196,180h1v1h-1zM146,304h1v1h-1zM196,385h1v1h-1zM74,263h1v1h-1zM53,103h1v1h-1zM136,282h1v1h-1zM148,202h1v1h-1zM78,214h1v1h-1zM91,300h1v1h-1z" fill="#383c3c"/>
<path d="M262,281h1v1h-1zM124,154h1v1h-1zM140,191h1v1h-1zM100,79h1v1h-1zM136,137h1v1h-1zM242,285h1v1h-1zM132,343h1v1h-1zM175,35h1v1h-1zM157,205h1v1h-1zM121,383h1v1h-1zM231,355h1v1h-1zM137,409h1v1h-1zM178,68h1v1h-1zM256,381h1v1h-1zM38,319h1v1h-1zM120,404h1v1h-1zM216,400h1v1h-1zM156,202h1v1h-1zM36,44h1v1h-1zM67,154h1v1h-1zM190,188h1v1h-1zM30,284h1v1h-1zM120,352h1v1h-1zM92,238h1v1h-1zM33,356h1v1h-1zM187,134h1v1h-1zM181,380h1v1h-1zM207,54h1v1h-1zM36,345h1v1h-1zM190,337h1v1h-1zM218,392h1v1h-1zM116,403h1v1h-1zM190,84h1v1h-1zM33,162h1v1h-1zM166,155h1v1h-1zM232,361h1v1h-1zM11,147h1v1h-1zM218,394h1v1h-1zM26,367h1v1h-1zM245,313h1v1h-1zM159,143h1v1h-1zM25,103h1v1h-1zM207,264h1v1h-1zM143,335h1v1h-1zM92,392h1v1h-1zM154,341h1v1h-1zM197,373h1v1h-1zM170,289h1v1h-1zM98,212h1v1h-1zM49,386h1v1h-1zM171,385h1v1h-1zM148,306h1v1h-1zM229,363h1v1h-1zM244,335h1v1h-1zM73,318h1v1h-1zM137,390h1v1h-1zM44,297h1v1h-1zM93,250h1v1h-1zM30,190h1v1h-1zM173,120h1v1h-1zM77,264h1v1h-1zM173,371h1v1h-1zM54,204h1v1h-1zM108,362h1v1h-1zM150,346h1v1h-1zM85,313h1v1h-1zM25,277h1v1h-1zM184,280h1v1h-1zM22,338h1v1h-1zM113,138h1v1h-1zM79,129h1v1h-1zM212,314h1v1h-1zM114,333h1v1h-1zM2,224h1v1h-1zM140,335h1v1h-1zM51,383h1v1h-1zM45,379h1v1h-1zM152,284h1v1h-1zM206,394h1v1h-1zM149,116h1v1h-1zM193,103h1v1h-1zM59,90h1v1h-1zM227,323h1v1h-1zM53,407h1v1h-1zM64,404h1v1h-1zM152,128h1v1h-1zM75,363h1v1h-1zM108,96h1v1h-1zM184,337h1v1h-1zM22,65h1v1h-1zM75,407h1v1h-1zM130,120h1v1h-1zM89,96h1v1h-1zM45,190h1v1h-1zM19,311h1v1h-1zM164,407h1v1h-1zM93,400h1v1h-1zM115,340h1v1h-1zM37,281h1v1h-1zM51,389h1v1h-1zM257,343h1v1h-1zM46,281h1v1h-1zM63,361h1v1h-1zM156,71h1v1h-1zM143,372h1v1h-1zM69,201h1v1h-1zM166,301h1v1h-1zM97,330h1v1h-1zM92,335h1v1h-1zM161,123h1v1h-1zM156,403h1v1h-1zM168,279h1v1h-1zM61,63h1v1h-1zM87,288h1v1h-1zM199,309h1v1h-1zM128,386h1v1h-1zM51,76h1v1h-1zM72,56h1v1h-1z" fill="#54646a"/>
<path d="M104,372h1v1h-1zM129,278h1v1h-1zM111,354h1v1h-1zM5,170h1v1h-1zM55,53h1v1h-1zM152,274h1v1h-1zM235,387h1v1h-1zM145,253h1v1h-1zM128,332h1v1h-1zM107,106h1v1h-1zM62,191h1v1h-1zM58,220h1v1h-1zM139,199h1v1h-1zM15,72h1v1h-1zM117,54h1v1h-1zM78,90h1v1h-1zM195,161h1v1h-1zM220,286h1v1h-1zM44,265h1v1h-1zM192,395h1v1h-1zM177,285h1v1h-1zM49,166h1v1h-1zM195,246h1v1h-1zM88,376h1v1h-1zM33,328h1v1h-1zM205,67h1v1h-1zM132,273h1v1h-1zM82,304h1v1h-1zM185,154h1v1h-1zM148,208h1v1h-1zM264,303h1v1h-1zM139,354h1v1h-1zM9,216h1v1h-1zM27,327h1v1h-1zM193,406h1v1h-1zM70,265h1v1h-1zM48,186h1v1h-1zM7,82h1v1h-1zM56,127h1v1h-1zM85,316h1v1h-1zM167,358h1v1h-1zM26,67h1v1h-1zM82,391h1v1h-1zM149,412h1v1h-1zM111,276h1v1h-1zM176,36h1v1h-1zM70,412h1v1h-1zM119,132h1v1h-1zM148,306h1v1h-1zM99,383h1v1h-1zM11,157h1v1h-1zM248,412h1v1h-1zM186,142h1v1h-1zM225,320h1v1h-1zM77,170h1v1h-1zM104,227h1v1h-1zM155,390h1v1h-1zM131,104h1v1h-1zM38,349h1v1h-1zM203,406h1v1h-1zM39,170h1v1h-1zM14,150h1v1h-1zM182,245h1v1h-1zM63,296h1v1h-1zM115,357h1v1h-1zM179,287h1v1h-1zM78,392h1v1h-1zM230,322h1v1h-1zM180,88h1v1h-1zM43,326h1v1h-1zM72,213h1v1h-1zM138,80h1v1h-1zM31,371h1v1h-1zM63,325h1v1h-1zM181,94h1v1h-1zM66,148h1v1h-1zM141,401h1v1h-1zM164,129h1v1h-1zM147,311h1v1h-1zM37,170h1v1h-1zM144,383h1v1h-1zM148,365h1v1h-1zM67,331h1v1h-1zM212,358h1v1h-1zM77,59h1v1h-1zM101,222h1v1h-1zM164,84h1v1h-1zM250,375h1v1h-1zM96,35h1v1h-1zM83,114h1v1h-1zM88,249h1v1h-1zM14,207h1v1h-1zM69,193h1v1h-1zM161,160h1v1h-1zM154,134h1v1h-1zM239,370h1v1h-1zM183,376h1v1h-1zM219,267h1v1h-1zM44,147h1v1h-1zM131,409h1v1h-1zM54,306h1v1h-1zM159,48h1v1h-1zM193,395h1v1h-1zM92,289h1v1h-1zM75,379h1v1h-1zM10,203h1v1h-1zM216,377h1v1h-1zM226,385h1v1h-1zM111,189h1v1h-1zM173,205h1v1h-1zM231,365h1v1h-1zM59,309h1v1h-1zM175,286h1v1h-1zM115,270h1v1h-1z" fill="#70624c"/>
<path d="M39,122h1v1h-1zM188,51h1v1h-1zM11,295h1v1h-1zM165,162h1v1h-1zM183,194h1v1h-1zM8,102h1v1h-1zM57,79h1v1h-1zM177,293h1v1h-1zM110,206h1v1h-1zM40,47h1v1h-1zM123,245h1v1h-1zM198,370h1v1h-1zM39,126h1v1h-1zM23,174h1v1h-1zM231,274h1v1h-1zM111,135h1v1h-1zM51,94h1v1h-1zM36,370h1v1h-1zM171,302h1v1h-1zM196,125h1v1h-1zM15,359h1v1h-1zM118,155h1v1h-1zM64,367h1v1h-1zM58,193h1v1h-1zM8,118h1v1h-1zM141,399h1v1h-1zM168,358h1v1h-1zM33,59h1v1h-1zM76,209h1v1h-1zM193,256h1v1h-1zM34,356h1v1h-1zM59,189h1v1h-1zM195,340h1v1h-1zM135,144h1v1h-1zM121,249h1v1h-1zM24,250h1v1h-1zM192,93h1v1h-1zM154,383h1v1h-1zM44,103h1v1h-1zM181,241h1v1h-1zM58,202h1v1h-1zM20,307h1v1h-1zM37,301h1v1h-1zM155,108h1v1h-1zM2,48h1v1h-1zM159,333h1v1h-1zM123,388h1v1h-1zM160,144h1v1h-1zM99,205h1v1h-1zM154,250h1v1h-1zM99,180h1v1h-1zM127,206h1v1h-1zM94,138h1v1h-1zM162,248h1v1h-1zM137,367h1v1h-1zM214,359h1v1h-1zM86,93h1v1h-1zM130,410h1v1h-1zM148,397h1v1h-1zM15,163h1v1h-1zM260,347h1v1h-1zM172,55h1v1h-1zM76,259h1v1h-1zM199,358h1v1h-1zM60,194h1v1h-1zM76,235h1v1h-1zM90,83h1v1h-1zM17,168h1v1h-1zM130,76h1v1h-1zM185,160h1v1h-1zM203,64h1v1h-1zM168,179h1v1h-1zM154,295h1v1h-1zM201,143h1v1h-1zM154,135h1v1h-1zM34,308h1v1h-1zM99,114h1v1h-1zM241,411h1v1h-1zM203,271h1v1h-1zM11,346h1v1h-1zM267,309h1v1h-1zM168,106h1v1h-1zM87,389h1v1h-1zM271,308h1v1h-1zM253,304h1v1h-1zM64,332h1v1h-1zM167,206h1v1h-1zM108,186h1v1h-1zM124,72h1v1h-1zM92,115h1v1h-1zM113,381h1v1h-1zM170,129h1v1h-1zM9,288h1v1h-1zM45,164h1v1h-1zM118,324h1v1h-1zM72,105h1v1h-1zM84,245h1v1h-1zM234,303h1v1h-1zM236,287h1v1h-1zM124,406h1v1h-1zM155,249h1v1h-1zM143,220h1v1h-1zM111,391h1v1h-1zM177,137h1v1h-1zM171,353h1v1h-1zM89,336h1v1h-1zM45,119h1v1h-1zM226,270h1v1h-1zM115,215h1v1h-1zM210,52h1v1h-1zM207,347h1v1h-1zM85,412h1v1h-1zM244,282h1v1h-1zM49,232h1v1h-1zM147,92h1v1h-1zM67,347h1v1h-1zM80,47h1v1h-1zM124,290h1v1h-1zM157,266h1v1h-1zM154,111h1v1h-1zM71,113h1v1h-1zM189,86h1v1h-1zM41,394h1v1h-1zM75,39h1v1h-1zM2,53h1v1h-1zM94,197h1v1h-1zM145,270h1v1h-1zM5,195h1v1h-1zM36,150h1v1h-1zM134,227h1v1h-1zM64,344h1v1h-1zM36,367h1v1h-1zM9,233h1v1h-1zM170,205h1v1h-1zM39,108h1v1h-1zM227,385h1v1h-1zM240,306h1v1h-1zM66,86h1v1h-1zM159,68h1v1h-1zM72,169h1v1h-1zM100,261h1v1h-1zM232,321h1v1h-1zM185,258h1v1h-1zM83,141h1v1h-1zM71,213h1v1h-1zM27,85h1v1h-1zM80,103h1v1h-1zM93,403h1v1h-1zM210,58h1v1h-1zM143,310h1v1h-1zM89,144h1v1h-1zM80,55h1v1h-1zM241,331h1v1h-1zM141,125h1v1h-1zM98,376h1v1h-1zM72,340h1v1h-1zM154,49h1v1h-1zM167,58h1v1h-1zM210,76h1v1h-1zM100,381h1v1h-1zM100,410h1v1h-1zM57,336h1v1h-1zM54,48h1v1h-1zM19,80h1v1h-1zM131,297h1v1h-1zM83,268h1v1h-1zM101,249h1v1h-1zM222,353h1v1h-1zM109,269h1v1h-1zM139,295h1v1h-1zM127,60h1v1h-1zM89,387h1v1h-1zM29,246h1v1h-1zM46,191h1v1h-1zM246,376h1v1h-1zM30,320h1v1h-1zM106,110h1v1h-1zM249,316h1v1h-1zM38,163h1v1h-1zM139,103h1v1h-1zM19,179h1v1h-1zM175,195h1v1h-1zM142,314h1v1h-1zM201,323h1v1h-1zM54,67h1v1h-1zM195,222h1v1h-1zM139,384h1v1h-1zM170,287h1v1h-1zM111,396h1v1h-1zM4,201h1v1h-1zM139,239h1v1h-1zM117,223h1v1h-1zM120,311h1v1h-1zM197,393h1v1h-1zM156,74h1v1h-1zM185,404h1v1h-1zM226,391h1v1h-1zM82,60h1v1h-1zM90,238h1v1h-1zM148,321h1v1h-1zM102,374h1v1h-1zM179,104h1v1h-1zM43,244h1v1h-1zM14,175h1v1h-1z" fill="#3a3630"/>
<path d="M135,304h1v1h-1zM110,386h1v1h-1zM193,190h1v1h-1zM251,330h1v1h-1zM166,328h1v1h-1zM140,43h1v1h-1zM40,49h1v1h-1zM4,148h1v1h-1zM230,375h1v1h-1zM158,36h1v1h-1zM27,209h1v1h-1zM42,255h1v1h-1zM252,336h1v1h-1zM215,331h1v1h-1zM176,402h1v1h-1zM21,227h1v1h-1zM77,57h1v1h-1zM94,275h1v1h-1zM118,203h1v1h-1zM119,377h1v1h-1zM215,47h1v1h-1zM108,276h1v1h-1zM69,105h1v1h-1zM87,412h1v1h-1zM114,67h1v1h-1zM84,82h1v1h-1zM149,69h1v1h-1zM141,179h1v1h-1zM75,60h1v1h-1zM202,263h1v1h-1zM228,326h1v1h-1zM12,229h1v1h-1zM92,162h1v1h-1zM241,295h1v1h-1zM242,398h1v1h-1zM50,191h1v1h-1zM191,55h1v1h-1zM182,388h1v1h-1zM52,239h1v1h-1zM156,345h1v1h-1zM160,175h1v1h-1zM245,317h1v1h-1zM102,179h1v1h-1zM129,63h1v1h-1zM128,152h1v1h-1zM114,64h1v1h-1zM95,316h1v1h-1zM187,151h1v1h-1zM212,413h1v1h-1zM70,105h1v1h-1zM172,199h1v1h-1zM86,412h1v1h-1zM98,58h1v1h-1zM180,308h1v1h-1zM200,89h1v1h-1zM197,357h1v1h-1zM197,101h1v1h-1zM10,127h1v1h-1zM94,220h1v1h-1zM94,44h1v1h-1zM156,139h1v1h-1zM119,372h1v1h-1zM231,309h1v1h-1zM233,379h1v1h-1zM178,348h1v1h-1zM119,201h1v1h-1zM58,237h1v1h-1zM111,103h1v1h-1zM271,301h1v1h-1zM127,85h1v1h-1zM235,273h1v1h-1zM17,133h1v1h-1zM80,315h1v1h-1zM57,85h1v1h-1zM95,383h1v1h-1zM49,177h1v1h-1zM96,59h1v1h-1zM173,394h1v1h-1zM74,123h1v1h-1zM170,109h1v1h-1zM119,281h1v1h-1zM164,255h1v1h-1zM141,196h1v1h-1zM72,397h1v1h-1zM155,124h1v1h-1zM137,68h1v1h-1zM205,93h1v1h-1zM58,123h1v1h-1zM79,192h1v1h-1zM65,269h1v1h-1zM127,47h1v1h-1zM178,204h1v1h-1zM241,271h1v1h-1zM243,364h1v1h-1zM16,137h1v1h-1zM109,110h1v1h-1zM145,157h1v1h-1zM160,278h1v1h-1zM98,129h1v1h-1zM39,281h1v1h-1zM5,193h1v1h-1zM186,47h1v1h-1zM158,85h1v1h-1zM18,300h1v1h-1zM62,412h1v1h-1zM99,307h1v1h-1zM223,399h1v1h-1zM70,49h1v1h-1zM101,128h1v1h-1zM4,186h1v1h-1z" fill="#74624e"/>
<path d="M229,397h1v1h-1zM157,62h1v1h-1zM178,244h1v1h-1zM99,171h1v1h-1zM11,223h1v1h-1zM181,216h1v1h-1zM49,89h1v1h-1zM80,393h1v1h-1zM125,242h1v1h-1zM36,210h1v1h-1zM151,107h1v1h-1zM105,350h1v1h-1zM229,388h1v1h-1zM49,394h1v1h-1zM248,379h1v1h-1zM101,346h1v1h-1zM170,208h1v1h-1zM55,200h1v1h-1zM224,265h1v1h-1zM223,376h1v1h-1zM157,241h1v1h-1zM65,168h1v1h-1zM30,308h1v1h-1zM192,262h1v1h-1zM190,304h1v1h-1zM200,90h1v1h-1zM173,137h1v1h-1zM185,115h1v1h-1zM204,74h1v1h-1zM183,330h1v1h-1zM180,392h1v1h-1zM134,278h1v1h-1zM54,106h1v1h-1zM146,365h1v1h-1zM13,290h1v1h-1zM156,396h1v1h-1zM153,333h1v1h-1zM91,37h1v1h-1zM155,291h1v1h-1zM144,340h1v1h-1zM182,186h1v1h-1zM212,303h1v1h-1zM128,131h1v1h-1zM144,235h1v1h-1zM142,246h1v1h-1zM89,360h1v1h-1zM87,365h1v1h-1zM63,405h1v1h-1zM211,313h1v1h-1zM151,217h1v1h-1zM97,49h1v1h-1zM50,174h1v1h-1zM218,395h1v1h-1zM14,101h1v1h-1zM133,249h1v1h-1zM186,389h1v1h-1zM72,122h1v1h-1zM132,288h1v1h-1zM94,200h1v1h-1zM77,225h1v1h-1zM120,282h1v1h-1zM45,221h1v1h-1zM219,364h1v1h-1zM219,267h1v1h-1zM91,181h1v1h-1zM141,264h1v1h-1zM157,253h1v1h-1zM163,284h1v1h-1zM183,317h1v1h-1zM34,63h1v1h-1zM137,179h1v1h-1zM133,192h1v1h-1zM12,117h1v1h-1zM223,414h1v1h-1zM83,268h1v1h-1zM106,238h1v1h-1zM5,216h1v1h-1zM27,142h1v1h-1zM136,186h1v1h-1zM183,358h1v1h-1zM58,379h1v1h-1zM122,128h1v1h-1zM38,290h1v1h-1zM150,202h1v1h-1zM32,274h1v1h-1zM197,232h1v1h-1zM148,239h1v1h-1zM66,187h1v1h-1zM58,261h1v1h-1zM138,314h1v1h-1zM75,344h1v1h-1zM224,295h1v1h-1zM203,399h1v1h-1zM36,250h1v1h-1zM25,374h1v1h-1zM76,264h1v1h-1zM86,170h1v1h-1zM4,236h1v1h-1zM78,208h1v1h-1zM115,299h1v1h-1zM34,177h1v1h-1zM162,262h1v1h-1zM182,226h1v1h-1zM77,63h1v1h-1zM195,207h1v1h-1zM178,312h1v1h-1zM30,310h1v1h-1zM45,76h1v1h-1zM66,73h1v1h-1zM235,339h1v1h-1zM87,192h1v1h-1zM175,109h1v1h-1zM105,212h1v1h-1zM185,52h1v1h-1zM189,306h1v1h-1zM181,70h1v1h-1zM135,85h1v1h-1zM196,227h1v1h-1zM216,378h1v1h-1zM206,308h1v1h-1zM185,392h1v1h-1zM139,280h1v1h-1zM196,388h1v1h-1zM125,120h1v1h-1zM129,397h1v1h-1zM181,225h1v1h-1zM190,229h1v1h-1zM189,358h1v1h-1zM190,237h1v1h-1zM17,70h1v1h-1zM83,81h1v1h-1zM23,268h1v1h-1zM135,70h1v1h-1zM134,110h1v1h-1zM245,402h1v1h-1zM208,74h1v1h-1zM56,55h1v1h-1zM73,134h1v1h-1zM139,43h1v1h-1zM67,303h1v1h-1zM25,181h1v1h-1zM245,287h1v1h-1zM206,49h1v1h-1zM134,125h1v1h-1zM177,349h1v1h-1zM133,56h1v1h-1zM226,340h1v1h-1zM192,349h1v1h-1zM100,335h1v1h-1zM139,386h1v1h-1zM179,139h1v1h-1zM18,217h1v1h-1zM39,367h1v1h-1zM57,128h1v1h-1zM102,222h1v1h-1zM214,272h1v1h-1zM139,389h1v1h-1zM151,194h1v1h-1zM223,334h1v1h-1zM33,146h1v1h-1zM10,64h1v1h-1zM80,119h1v1h-1zM107,138h1v1h-1zM137,146h1v1h-1zM40,229h1v1h-1zM153,231h1v1h-1zM150,371h1v1h-1zM252,281h1v1h-1zM139,296h1v1h-1zM114,370h1v1h-1zM105,166h1v1h-1zM177,210h1v1h-1zM96,266h1v1h-1zM147,409h1v1h-1zM193,191h1v1h-1zM15,301h1v1h-1zM209,400h1v1h-1zM157,369h1v1h-1zM164,149h1v1h-1zM126,196h1v1h-1zM141,90h1v1h-1zM87,243h1v1h-1zM154,328h1v1h-1zM132,394h1v1h-1zM82,305h1v1h-1zM81,152h1v1h-1zM95,251h1v1h-1zM205,331h1v1h-1zM1,62h1v1h-1zM59,371h1v1h-1zM17,74h1v1h-1zM115,66h1v1h-1zM51,386h1v1h-1zM19,365h1v1h-1zM143,395h1v1h-1zM238,397h1v1h-1zM246,357h1v1h-1zM100,210h1v1h-1zM36,85h1v1h-1zM97,48h1v1h-1zM163,104h1v1h-1zM244,274h1v1h-1zM184,263h1v1h-1zM149,278h1v1h-1zM79,139h1v1h-1zM234,319h1v1h-1zM105,146h1v1h-1zM106,127h1v1h-1zM23,221h1v1h-1zM61,211h1v1h-1zM245,393h1v1h-1zM164,221h1v1h-1zM62,135h1v1h-1zM96,196h1v1h-1zM133,333h1v1h-1zM243,327h1v1h-1zM158,255h1v1h-1zM125,273h1v1h-1z" fill="#2a3238"/>
<path d="M170,47h1v1h-1zM183,194h1v1h-1zM184,300h1v1h-1zM113,67h1v1h-1zM46,204h1v1h-1zM156,87h1v1h-1zM224,362h1v1h-1zM89,349h1v1h-1zM2,110h1v1h-1zM73,360h1v1h-1zM64,228h1v1h-1zM97,339h1v1h-1zM196,336h1v1h-1zM49,285h1v1h-1zM249,402h1v1h-1zM151,49h1v1h-1zM239,273h1v1h-1zM55,261h1v1h-1zM245,280h1v1h-1zM185,108h1v1h-1zM174,156h1v1h-1zM193,42h1v1h-1zM190,287h1v1h-1zM14,143h1v1h-1zM14,289h1v1h-1zM91,138h1v1h-1zM175,113h1v1h-1zM26,53h1v1h-1zM108,359h1v1h-1zM76,222h1v1h-1zM59,170h1v1h-1zM155,282h1v1h-1zM206,76h1v1h-1zM211,297h1v1h-1zM106,330h1v1h-1zM203,289h1v1h-1zM63,336h1v1h-1zM134,242h1v1h-1zM159,283h1v1h-1zM230,365h1v1h-1zM184,181h1v1h-1zM48,327h1v1h-1zM60,211h1v1h-1zM117,388h1v1h-1zM94,359h1v1h-1zM180,363h1v1h-1zM162,398h1v1h-1zM47,99h1v1h-1zM59,395h1v1h-1zM5,52h1v1h-1zM142,353h1v1h-1zM48,406h1v1h-1zM68,58h1v1h-1zM63,40h1v1h-1zM238,396h1v1h-1zM56,354h1v1h-1zM193,392h1v1h-1zM42,150h1v1h-1zM61,234h1v1h-1zM33,167h1v1h-1zM130,76h1v1h-1zM168,359h1v1h-1zM90,194h1v1h-1zM175,329h1v1h-1zM93,137h1v1h-1zM109,152h1v1h-1zM183,162h1v1h-1zM138,377h1v1h-1zM55,42h1v1h-1zM63,249h1v1h-1zM113,38h1v1h-1zM143,94h1v1h-1zM181,385h1v1h-1zM190,148h1v1h-1zM113,314h1v1h-1zM175,95h1v1h-1zM17,342h1v1h-1zM42,262h1v1h-1zM187,380h1v1h-1zM236,353h1v1h-1zM43,225h1v1h-1zM189,357h1v1h-1zM67,111h1v1h-1zM76,280h1v1h-1zM266,289h1v1h-1zM86,78h1v1h-1zM132,293h1v1h-1zM185,166h1v1h-1zM187,300h1v1h-1zM207,272h1v1h-1zM50,388h1v1h-1zM155,100h1v1h-1zM196,148h1v1h-1zM75,244h1v1h-1zM8,213h1v1h-1zM109,348h1v1h-1zM169,119h1v1h-1zM94,359h1v1h-1zM104,304h1v1h-1zM67,296h1v1h-1zM28,176h1v1h-1zM142,59h1v1h-1zM34,151h1v1h-1zM56,299h1v1h-1zM44,318h1v1h-1zM55,59h1v1h-1zM129,311h1v1h-1zM194,362h1v1h-1zM195,254h1v1h-1zM110,93h1v1h-1zM29,98h1v1h-1zM194,119h1v1h-1zM32,154h1v1h-1zM76,127h1v1h-1zM141,364h1v1h-1zM226,304h1v1h-1zM204,281h1v1h-1zM198,306h1v1h-1zM245,371h1v1h-1zM191,333h1v1h-1zM20,362h1v1h-1zM242,318h1v1h-1zM75,210h1v1h-1zM72,127h1v1h-1zM55,325h1v1h-1zM195,119h1v1h-1zM187,259h1v1h-1zM85,92h1v1h-1zM189,256h1v1h-1zM242,370h1v1h-1zM167,81h1v1h-1zM194,174h1v1h-1zM122,264h1v1h-1zM67,240h1v1h-1zM237,357h1v1h-1zM109,401h1v1h-1zM27,317h1v1h-1zM85,354h1v1h-1zM189,354h1v1h-1zM97,238h1v1h-1zM55,343h1v1h-1zM64,295h1v1h-1zM128,234h1v1h-1zM173,84h1v1h-1zM227,358h1v1h-1zM16,338h1v1h-1zM13,202h1v1h-1zM137,88h1v1h-1zM113,256h1v1h-1zM60,285h1v1h-1zM40,352h1v1h-1zM152,348h1v1h-1zM75,225h1v1h-1zM210,400h1v1h-1zM93,347h1v1h-1zM257,311h1v1h-1zM150,133h1v1h-1zM162,143h1v1h-1zM198,270h1v1h-1zM159,36h1v1h-1zM185,179h1v1h-1zM176,345h1v1h-1zM90,298h1v1h-1zM12,165h1v1h-1zM21,220h1v1h-1zM118,106h1v1h-1zM51,283h1v1h-1zM251,375h1v1h-1zM265,307h1v1h-1zM194,254h1v1h-1zM67,51h1v1h-1zM183,263h1v1h-1zM182,117h1v1h-1zM37,339h1v1h-1zM43,215h1v1h-1zM219,407h1v1h-1zM68,217h1v1h-1zM52,388h1v1h-1zM43,280h1v1h-1zM131,191h1v1h-1zM73,394h1v1h-1zM182,314h1v1h-1zM157,68h1v1h-1zM121,93h1v1h-1zM133,196h1v1h-1zM262,312h1v1h-1zM164,379h1v1h-1zM17,46h1v1h-1zM233,345h1v1h-1zM163,356h1v1h-1zM159,325h1v1h-1zM128,304h1v1h-1zM118,307h1v1h-1zM63,215h1v1h-1zM68,307h1v1h-1zM120,106h1v1h-1zM182,236h1v1h-1zM51,73h1v1h-1zM251,332h1v1h-1zM202,313h1v1h-1zM58,75h1v1h-1zM115,384h1v1h-1zM168,333h1v1h-1zM220,317h1v1h-1zM11,65h1v1h-1zM52,162h1v1h-1zM171,328h1v1h-1zM22,230h1v1h-1zM50,319h1v1h-1zM114,322h1v1h-1zM225,408h1v1h-1zM194,360h1v1h-1zM87,268h1v1h-1zM162,128h1v1h-1zM31,183h1v1h-1zM150,244h1v1h-1zM84,196h1v1h-1zM156,367h1v1h-1zM64,335h1v1h-1zM182,402h1v1h-1zM179,54h1v1h-1zM71,241h1v1h-1zM55,333h1v1h-1zM59,377h1v1h-1zM40,206h1v1h-1zM179,63h1v1h-1zM135,378h1v1h-1zM11,136h1v1h-1zM190,298h1v1h-1zM165,95h1v1h-1zM149,220h1v1h-1z" fill="#343a36"/>
<path d="M163,206h1v1h-1zM135,217h1v1h-1zM189,307h1v1h-1zM67,209h1v1h-1zM85,107h1v1h-1zM29,155h1v1h-1zM176,103h1v1h-1zM45,180h1v1h-1zM134,266h1v1h-1zM203,127h1v1h-1zM91,250h1v1h-1zM149,227h1v1h-1zM189,251h1v1h-1zM128,313h1v1h-1zM217,297h1v1h-1zM132,255h1v1h-1zM232,343h1v1h-1zM71,382h1v1h-1zM247,381h1v1h-1zM33,238h1v1h-1zM143,123h1v1h-1zM201,327h1v1h-1zM27,378h1v1h-1zM40,199h1v1h-1zM175,198h1v1h-1zM34,273h1v1h-1zM159,357h1v1h-1zM99,71h1v1h-1zM123,410h1v1h-1zM27,347h1v1h-1zM119,226h1v1h-1zM75,109h1v1h-1zM80,241h1v1h-1zM93,220h1v1h-1zM170,171h1v1h-1zM223,407h1v1h-1zM37,148h1v1h-1zM108,138h1v1h-1zM107,354h1v1h-1zM113,321h1v1h-1zM157,288h1v1h-1zM113,196h1v1h-1zM171,180h1v1h-1zM61,183h1v1h-1zM220,388h1v1h-1zM34,234h1v1h-1zM228,380h1v1h-1zM80,83h1v1h-1zM90,41h1v1h-1zM41,299h1v1h-1zM49,146h1v1h-1zM196,254h1v1h-1zM182,314h1v1h-1zM22,255h1v1h-1zM153,55h1v1h-1zM37,341h1v1h-1zM193,154h1v1h-1zM49,207h1v1h-1zM121,88h1v1h-1zM163,58h1v1h-1zM202,363h1v1h-1zM267,290h1v1h-1zM54,368h1v1h-1zM181,48h1v1h-1zM127,393h1v1h-1zM162,233h1v1h-1zM131,179h1v1h-1zM41,183h1v1h-1zM38,395h1v1h-1zM135,167h1v1h-1zM124,401h1v1h-1zM8,107h1v1h-1zM168,146h1v1h-1zM94,339h1v1h-1zM98,268h1v1h-1zM95,53h1v1h-1zM14,177h1v1h-1zM93,44h1v1h-1zM86,306h1v1h-1zM95,412h1v1h-1zM10,46h1v1h-1zM43,168h1v1h-1zM178,402h1v1h-1zM42,334h1v1h-1zM125,176h1v1h-1zM133,296h1v1h-1zM170,317h1v1h-1zM210,276h1v1h-1zM255,279h1v1h-1zM184,209h1v1h-1zM33,90h1v1h-1zM147,258h1v1h-1zM61,199h1v1h-1zM207,261h1v1h-1zM11,270h1v1h-1zM208,51h1v1h-1zM51,367h1v1h-1zM130,39h1v1h-1zM24,330h1v1h-1zM22,314h1v1h-1zM4,59h1v1h-1zM197,305h1v1h-1z" fill="#546a78"/>
<path d="M40,138h1v1h-1zM80,303h1v1h-1zM46,382h1v1h-1zM84,138h1v1h-1zM184,406h1v1h-1zM141,313h1v1h-1zM102,336h1v1h-1zM233,302h1v1h-1zM250,282h1v1h-1zM161,240h1v1h-1zM169,161h1v1h-1zM22,231h1v1h-1zM202,119h1v1h-1zM199,308h1v1h-1zM16,95h1v1h-1zM102,129h1v1h-1zM91,51h1v1h-1zM78,339h1v1h-1zM82,339h1v1h-1zM123,264h1v1h-1zM131,406h1v1h-1zM201,384h1v1h-1zM103,41h1v1h-1zM155,392h1v1h-1zM22,50h1v1h-1zM204,116h1v1h-1zM178,372h1v1h-1zM35,117h1v1h-1zM106,378h1v1h-1zM107,38h1v1h-1zM155,406h1v1h-1zM72,124h1v1h-1zM128,295h1v1h-1zM145,287h1v1h-1zM193,207h1v1h-1zM34,216h1v1h-1zM117,406h1v1h-1zM174,163h1v1h-1zM153,310h1v1h-1zM166,64h1v1h-1zM151,174h1v1h-1zM102,235h1v1h-1zM40,191h1v1h-1zM43,297h1v1h-1zM165,128h1v1h-1zM6,163h1v1h-1zM150,183h1v1h-1zM138,101h1v1h-1zM23,223h1v1h-1zM151,300h1v1h-1zM83,239h1v1h-1zM69,220h1v1h-1zM131,115h1v1h-1zM53,241h1v1h-1zM118,216h1v1h-1zM23,140h1v1h-1zM140,397h1v1h-1zM238,334h1v1h-1zM52,166h1v1h-1zM61,153h1v1h-1zM60,39h1v1h-1zM17,300h1v1h-1zM100,45h1v1h-1zM115,357h1v1h-1zM179,272h1v1h-1zM222,334h1v1h-1zM43,101h1v1h-1zM142,317h1v1h-1zM99,269h1v1h-1zM56,83h1v1h-1zM141,187h1v1h-1zM249,280h1v1h-1zM204,54h1v1h-1zM83,286h1v1h-1zM136,339h1v1h-1zM93,335h1v1h-1zM128,96h1v1h-1zM121,75h1v1h-1zM41,45h1v1h-1zM38,253h1v1h-1zM150,313h1v1h-1zM46,71h1v1h-1zM46,147h1v1h-1zM159,47h1v1h-1zM72,346h1v1h-1zM148,137h1v1h-1zM47,128h1v1h-1zM49,343h1v1h-1zM41,370h1v1h-1zM180,400h1v1h-1zM23,81h1v1h-1zM135,146h1v1h-1z" fill="#527068"/>
<path d="M43,291h1v1h-1zM81,175h1v1h-1zM79,79h1v1h-1zM12,148h1v1h-1zM165,231h1v1h-1zM62,157h1v1h-1zM143,307h1v1h-1zM97,265h1v1h-1zM37,329h1v1h-1zM202,75h1v1h-1zM73,270h1v1h-1zM188,342h1v1h-1zM174,330h1v1h-1zM123,396h1v1h-1zM136,347h1v1h-1zM244,292h1v1h-1zM167,111h1v1h-1zM129,332h1v1h-1zM48,352h1v1h-1zM147,398h1v1h-1zM195,370h1v1h-1zM31,197h1v1h-1zM169,278h1v1h-1zM160,155h1v1h-1zM124,375h1v1h-1zM102,298h1v1h-1zM118,309h1v1h-1zM148,333h1v1h-1zM127,97h1v1h-1zM74,209h1v1h-1zM26,46h1v1h-1zM4,200h1v1h-1zM197,281h1v1h-1zM169,103h1v1h-1zM151,207h1v1h-1zM181,222h1v1h-1zM130,55h1v1h-1zM53,205h1v1h-1zM12,143h1v1h-1zM104,47h1v1h-1zM199,305h1v1h-1zM248,361h1v1h-1zM100,318h1v1h-1zM96,114h1v1h-1zM22,268h1v1h-1zM183,285h1v1h-1zM5,190h1v1h-1zM32,219h1v1h-1zM68,96h1v1h-1zM141,104h1v1h-1zM120,100h1v1h-1zM176,199h1v1h-1zM2,228h1v1h-1zM50,81h1v1h-1zM145,198h1v1h-1zM167,209h1v1h-1zM89,199h1v1h-1zM184,320h1v1h-1zM251,325h1v1h-1zM87,296h1v1h-1zM85,279h1v1h-1zM180,304h1v1h-1zM75,109h1v1h-1zM181,43h1v1h-1zM41,365h1v1h-1zM119,46h1v1h-1zM21,299h1v1h-1zM148,372h1v1h-1zM105,322h1v1h-1zM199,347h1v1h-1zM133,235h1v1h-1zM80,309h1v1h-1zM15,285h1v1h-1zM204,275h1v1h-1zM41,373h1v1h-1zM169,373h1v1h-1zM218,401h1v1h-1zM16,171h1v1h-1zM192,59h1v1h-1zM186,395h1v1h-1zM190,394h1v1h-1zM137,118h1v1h-1zM221,327h1v1h-1zM107,324h1v1h-1zM186,191h1v1h-1zM144,96h1v1h-1zM209,400h1v1h-1zM189,305h1v1h-1z" fill="#626256"/>
<path d="M177,384h1v1h-1zM263,305h1v1h-1zM122,363h1v1h-1zM196,109h1v1h-1zM114,413h1v1h-1zM118,228h1v1h-1zM73,367h1v1h-1zM167,164h1v1h-1zM182,166h1v1h-1zM66,176h1v1h-1zM62,47h1v1h-1zM153,193h1v1h-1zM119,390h1v1h-1zM229,292h1v1h-1zM156,44h1v1h-1zM14,329h1v1h-1zM86,257h1v1h-1zM255,308h1v1h-1zM243,313h1v1h-1zM43,260h1v1h-1zM212,309h1v1h-1zM237,297h1v1h-1zM157,167h1v1h-1zM100,261h1v1h-1zM121,102h1v1h-1zM86,260h1v1h-1zM131,341h1v1h-1zM12,231h1v1h-1zM154,357h1v1h-1zM83,51h1v1h-1zM130,176h1v1h-1zM55,280h1v1h-1zM260,338h1v1h-1zM1,174h1v1h-1zM118,287h1v1h-1zM13,165h1v1h-1zM260,278h1v1h-1zM143,61h1v1h-1zM212,342h1v1h-1zM26,75h1v1h-1zM125,189h1v1h-1zM133,218h1v1h-1zM13,300h1v1h-1zM62,333h1v1h-1zM131,214h1v1h-1zM45,73h1v1h-1zM212,295h1v1h-1zM91,77h1v1h-1zM175,279h1v1h-1zM31,38h1v1h-1zM158,48h1v1h-1zM29,73h1v1h-1zM98,314h1v1h-1zM237,361h1v1h-1zM172,135h1v1h-1zM240,318h1v1h-1zM185,150h1v1h-1zM230,388h1v1h-1zM210,69h1v1h-1zM125,343h1v1h-1zM230,331h1v1h-1zM64,296h1v1h-1zM116,372h1v1h-1zM144,57h1v1h-1zM29,101h1v1h-1zM165,43h1v1h-1zM103,267h1v1h-1zM156,267h1v1h-1zM246,303h1v1h-1zM103,201h1v1h-1zM119,409h1v1h-1zM114,207h1v1h-1zM252,308h1v1h-1zM201,368h1v1h-1zM166,96h1v1h-1zM10,315h1v1h-1zM12,307h1v1h-1zM120,148h1v1h-1zM6,145h1v1h-1zM38,263h1v1h-1zM52,307h1v1h-1zM5,155h1v1h-1zM27,189h1v1h-1zM264,319h1v1h-1zM86,180h1v1h-1zM66,276h1v1h-1zM194,125h1v1h-1zM98,167h1v1h-1zM55,167h1v1h-1zM51,86h1v1h-1zM196,380h1v1h-1zM174,80h1v1h-1zM187,198h1v1h-1zM80,73h1v1h-1zM121,382h1v1h-1zM53,100h1v1h-1zM59,109h1v1h-1zM192,54h1v1h-1zM185,120h1v1h-1zM48,242h1v1h-1zM111,268h1v1h-1zM191,126h1v1h-1zM106,335h1v1h-1zM151,70h1v1h-1zM92,216h1v1h-1zM137,143h1v1h-1zM92,394h1v1h-1zM113,160h1v1h-1zM250,270h1v1h-1zM119,235h1v1h-1zM73,316h1v1h-1zM191,318h1v1h-1zM113,209h1v1h-1zM134,392h1v1h-1zM159,373h1v1h-1zM67,39h1v1h-1zM174,314h1v1h-1zM177,129h1v1h-1zM183,275h1v1h-1zM124,53h1v1h-1zM43,361h1v1h-1zM166,339h1v1h-1zM71,190h1v1h-1zM118,102h1v1h-1zM55,261h1v1h-1zM157,273h1v1h-1zM194,81h1v1h-1zM69,191h1v1h-1zM199,70h1v1h-1zM186,278h1v1h-1zM122,153h1v1h-1zM123,267h1v1h-1zM99,149h1v1h-1zM49,342h1v1h-1zM50,287h1v1h-1zM138,107h1v1h-1zM76,117h1v1h-1zM187,296h1v1h-1zM84,177h1v1h-1zM67,75h1v1h-1zM135,115h1v1h-1zM259,366h1v1h-1zM0,66h1v1h-1zM98,210h1v1h-1zM186,198h1v1h-1zM135,187h1v1h-1zM94,153h1v1h-1zM23,296h1v1h-1zM194,173h1v1h-1zM97,249h1v1h-1zM76,221h1v1h-1zM198,141h1v1h-1zM34,54h1v1h-1zM27,138h1v1h-1zM226,406h1v1h-1zM74,318h1v1h-1zM166,89h1v1h-1zM65,220h1v1h-1zM208,84h1v1h-1zM99,157h1v1h-1zM192,110h1v1h-1zM160,170h1v1h-1zM156,97h1v1h-1zM171,164h1v1h-1zM84,392h1v1h-1zM254,379h1v1h-1zM188,143h1v1h-1zM85,225h1v1h-1zM220,377h1v1h-1zM160,95h1v1h-1zM81,362h1v1h-1zM130,380h1v1h-1zM166,79h1v1h-1zM115,102h1v1h-1zM32,295h1v1h-1zM140,88h1v1h-1zM62,310h1v1h-1zM160,159h1v1h-1zM50,266h1v1h-1zM100,335h1v1h-1zM102,321h1v1h-1z" fill="#303a40"/>
<g fill="none" stroke="#1d5242" stroke-width="0.5" stroke-dasharray="0.9,0.8"><path d="M0.0,78.6 L59.6,47.1"/><path d="M206.2,35.0 L227.3,140.0 L249.2,230.0 L274.2,325.0 L298.0,415.0"/><path d="M504.8,35.0 L488.5,140.0 L472.2,230.0 L456.0,325.0 L452.0,345.0"/><path d="M677.8,35.0 L752.0,76.2"/><path d="M752.0,202.5 L734.0,230.0 L670.9,325.0 L604.4,415.0"/><path d="M46.0,407.5 L165.0,310.0 L188.0,300.0 L260.5,272.5 L376.0,255.0 L456.0,263.0 L514.0,277.7 L552.0,292.6 L577.7,304.3 L600.0,315.0 L714.0,415.0"/><path d="M0.0,267.5 L117.5,415.0"/></g>
<g fill="none" stroke="#7a7a72" stroke-width="0.4" stroke-opacity="0.65"><path d="M59.6,47.1 L108.0,95.6 L171.8,123.6 L211.0,131.5"/><path d="M95.0,35.0 L114.8,79.5 L108.0,95.6"/><path d="M0.0,131.0 L23.8,128.8 L33.5,185.0"/><path d="M113.0,218.8 L160.8,228.2 L117.5,310.0 L83.8,395.8 L253.0,366.8 L281.8,325.8"/><path d="M211.0,131.5 L240.5,58.7 L298.8,74.2 L338.0,35.0"/><path d="M298.8,74.2 L339.5,162.5 L455.5,208.8"/><path d="M474.8,202.5 L446.0,158.8 L488.5,129.5 L488.5,88.8 L513.8,69.5 L609.0,55.0 L701.0,103.2 L721.0,62.5 L714.0,43.8 L713.5,38.5"/><path d="M211.0,131.5 L331.5,200.4 L395.6,325.0"/><path d="M455.5,208.8 L430.0,262.0"/><path d="M408.0,35.0 L414.8,46.2 L410.2,63.8"/><path d="M529.1,293.6 L493.0,354.4 L478.0,415.0"/><path d="M493.0,354.4 L530.2,376.6 L601.1,345.4"/><path d="M530.2,376.6 L512.0,415.0"/><path d="M752.0,321.0 L738.5,366.3 L739.6,378.8 L752.0,384.7"/></g>

<g fill="none" stroke="#1b8e8e" stroke-width="0.65">
<circle cx="119.7" cy="90.4" r="1.3" fill="#1b8e8e"/>
<rect x="114.9" y="113.8" width="2.6" height="2.6"/>
<circle cx="43" cy="107" r="3" stroke-dasharray="1,0.8"/>
<rect x="203" y="166.2" width="2.6" height="2.6"/>
<path d="M70,206.5 L72.2,208.75 L70,211 L67.8,208.75 Z"/>
<circle cx="100" cy="212.5" r="1.3"/>
<circle cx="126.25" cy="217.5" r="1.3" fill="#1b8e8e"/>
<circle cx="183.75" cy="192.5" r="0.9" fill="#1b8e8e"/>
<path d="M122.3,239.9 L138.4,228 L150.7,242.7 L134.1,254.5 Z M134.6,232.3 L146.2,247 M128.4,236.6 L140.5,251.2 M123.5,242.8 L127.5,241.5 L129,246.5 L125,248 Z"/><circle cx="137" cy="244" r="2.8" stroke-width="0.9"/>
<circle cx="266.25" cy="287.5" r="1.5"/>
<circle cx="89.25" cy="361.75" r="1.2" fill="#1b8e8e"/>
<circle cx="125.75" cy="339.25" r="1.4"/>
<rect x="168.7" y="367.4" width="2.6" height="2.6"/>
<circle cx="178.75" cy="328" r="2.6" stroke-dasharray="1,0.7"/>
<rect x="274.2" y="349.9" width="2.6" height="2.6"/>
<circle cx="244.75" cy="329.25" r="1.2" fill="#1b8e8e"/>
<circle cx="234.25" cy="340" r="3" stroke-dasharray="0.8,0.8"/>
<path d="M454.25,163.75 L464.25,156.25 L490.5,188.75 L478.5,198 Z" stroke-width="0.5"/>
<path d="M332.8,177.3 L335,176.2 L340.7,185.4 L338.5,186.6 Z" stroke-width="0.55"/>
<path d="M323,201.2 L328.3,196.5 L333,205.3 L327.7,206.5 Z" stroke-width="0.55"/><circle cx="328.5" cy="193.5" r="0.7" fill="#5040a0" stroke="none"/><circle cx="328.5" cy="208.9" r="0.7" fill="#5040a0" stroke="none"/>
</g>
<g fill="none" stroke="#4040a0" stroke-width="0.5">
<path d="M87.5,180.5 L90.5,177.5 L95,182 L92,185 Z M92,185 L95,182 L100,187 L97,190 Z"/>
</g>
<path d="M72,58 L74.5,53 L75.5,54 L73.5,58.5 Z" fill="#c08020"/>
<circle cx="293.8" cy="189.5" r="0.8" fill="#1a8a90"/><circle cx="297.3" cy="190.8" r="0.7" fill="#1a8a90"/><circle cx="298.3" cy="193.2" r="0.9" fill="#3ab030"/>
<path d="M364.5,221.7 L375.3,212.3 L384.5,223 L374.8,234.4 Z" fill="none" stroke="#1f8a22" stroke-width="0.75"/>
<ellipse cx="374.8" cy="223" rx="2.4" ry="3.8" transform="rotate(-35 374.8 223)" fill="#b85a5a" opacity="0.9"/>
<circle cx="374.2" cy="224.2" r="1.5" fill="#f4ece0"/>
<circle cx="370" cy="217.5" r="1.2" fill="#2a9a9a"/>
<path d="M366,210.5 L368,212 M369,211 L371,213 M366,214 L369,215.5 M365,216 L367,218" stroke="#4ab8c0" stroke-width="0.6"/>
<circle cx="371.5" cy="219.5" r="0.9" fill="#c8d8d0"/>
<circle cx="377" cy="226" r="0.8" fill="#d0a0c0"/>

<rect x="24.0" y="60.8" width="1.2" height="1.2" fill="#f0b070"/>
<rect x="70.1" y="59.7" width="1.2" height="1.2" fill="#bfe8f0"/>
<rect x="81.6" y="58.7" width="1.2" height="1.2" fill="#f0b070"/>
<rect x="90.8" y="74.0" width="1.2" height="1.2" fill="#bfe8f0"/>
<rect x="82.4" y="81.3" width="1.2" height="1.2" fill="#e8e8e0"/>
<rect x="77.0" y="49.8" width="1.2" height="1.2" fill="#f0c0c0"/>
<rect x="66.2" y="49.0" width="1.2" height="1.2" fill="#e8e8e0"/>
<rect x="63.9" y="58.2" width="1.2" height="1.2" fill="#f0c0c0"/>
<rect x="80.8" y="98.9" width="1.2" height="1.2" fill="#f0b070"/>
<rect x="179.1" y="61.3" width="1.2" height="1.2" fill="#e8e8e0"/>
<rect x="158.9" y="51.2" width="1.2" height="1.2" fill="#e8e8e0"/>
<rect x="173.4" y="43.8" width="1.2" height="1.2" fill="#e8e8e0"/>
<rect x="188.4" y="110.7" width="1.2" height="1.2" fill="#e8e8e0"/>
<rect x="201.4" y="92.3" width="1.2" height="1.2" fill="#f0e0a0"/>
<rect x="241.2" y="68.2" width="1.2" height="1.2" fill="#f0e0a0"/>
<rect x="287.4" y="90.7" width="1.2" height="1.2" fill="#bfe8f0"/>
<rect x="323.4" y="113.2" width="1.2" height="1.2" fill="#bfe8f0"/>
<rect x="329.9" y="98.2" width="1.2" height="1.2" fill="#bfe8f0"/>
<rect x="359.9" y="84.4" width="1.2" height="1.2" fill="#f0b070"/>
<rect x="367.4" y="94.4" width="1.2" height="1.2" fill="#e8e8e0"/>
<rect x="338.4" y="121.9" width="1.2" height="1.2" fill="#e8e8e0"/>
<rect x="279.9" y="129.4" width="1.2" height="1.2" fill="#bfe8f0"/>
<rect x="253.4" y="88.2" width="1.2" height="1.2" fill="#bfe8f0"/>
<rect x="288.4" y="43.1" width="1.2" height="1.2" fill="#f0e0a0"/>
<rect x="521.4" y="58.9" width="1.2" height="1.2" fill="#bfe8f0"/>
<rect x="550.4" y="44.9" width="1.2" height="1.2" fill="#bfe8f0"/>
<rect x="430.4" y="68.2" width="1.2" height="1.2" fill="#bfe8f0"/>
<rect x="549.1" y="101.9" width="1.2" height="1.2" fill="#bfe8f0"/>
<rect x="386.4" y="46.9" width="1.2" height="1.2" fill="#bfe8f0"/>
<rect x="501.4" y="61.9" width="1.2" height="1.2" fill="#f0b070"/>
<rect x="607.1" y="71.4" width="1.2" height="1.2" fill="#f0b070"/>
<rect x="630.9" y="99.4" width="1.2" height="1.2" fill="#f0b070"/>
<rect x="688.4" y="95.2" width="1.2" height="1.2" fill="#f0b070"/>
<rect x="677.9" y="107.7" width="1.2" height="1.2" fill="#f0b070"/>
<rect x="590.9" y="81.9" width="1.2" height="1.2" fill="#bfe8f0"/>
<rect x="640.9" y="65.7" width="1.2" height="1.2" fill="#a0f0d0"/>
<rect x="568.4" y="126.9" width="1.2" height="1.2" fill="#f0b070"/>
<rect x="748.4" y="80.7" width="1.2" height="1.2" fill="#bfe8f0"/>
<rect x="602.1" y="196.9" width="1.2" height="1.2" fill="#f0c0c0"/>
<rect x="582.1" y="173.2" width="1.2" height="1.2" fill="#bfe8f0"/>
<rect x="614.6" y="163.2" width="1.2" height="1.2" fill="#bfe8f0"/>
<rect x="719.6" y="211.9" width="1.2" height="1.2" fill="#bfe8f0"/>
<rect x="694.6" y="160.7" width="1.2" height="1.2" fill="#bfe8f0"/>
<rect x="635.9" y="184.4" width="1.2" height="1.2" fill="#f0e0a0"/>
<rect x="570.9" y="138.2" width="1.2" height="1.2" fill="#bfe8f0"/>
<rect x="511.6" y="198.2" width="1.2" height="1.2" fill="#f0e0a0"/>
<rect x="537.4" y="143.9" width="1.2" height="1.2" fill="#bfe8f0"/>
<rect x="480.4" y="166.9" width="1.2" height="1.2" fill="#bfe8f0"/>
<rect x="531.6" y="223.2" width="1.2" height="1.2" fill="#f0e0a0"/>
<rect x="444.1" y="151.4" width="1.2" height="1.2" fill="#bfe8f0"/>
<rect x="384.1" y="190.7" width="1.2" height="1.2" fill="#f0b070"/>
<rect x="130.7" y="153.2" width="1.2" height="1.2" fill="#bfe8f0"/>
<rect x="66.9" y="235.7" width="1.2" height="1.2" fill="#bfe8f0"/>
<rect x="69.4" y="243.9" width="1.2" height="1.2" fill="#f0c0c0"/>
<rect x="19.9" y="268.1" width="1.2" height="1.2" fill="#bfe8f0"/>
<rect x="150.7" y="274.4" width="1.2" height="1.2" fill="#f0b070"/>
<rect x="116.9" y="307.4" width="1.2" height="1.2" fill="#f0c0c0"/>
<rect x="289.9" y="256.4" width="1.2" height="1.2" fill="#f0b070"/>
<rect x="317.4" y="264.4" width="1.2" height="1.2" fill="#e8e8e0"/>
<rect x="351.1" y="284.4" width="1.2" height="1.2" fill="#bfe8f0"/>
<rect x="491.4" y="243.4" width="1.2" height="1.2" fill="#bfe8f0"/>
<rect x="499.4" y="257.4" width="1.2" height="1.2" fill="#bfe8f0"/>
<rect x="485.4" y="273.4" width="1.2" height="1.2" fill="#bfe8f0"/>
<rect x="623.4" y="258.8" width="1.2" height="1.2" fill="#bfe8f0"/>
<rect x="641.4" y="261.4" width="1.2" height="1.2" fill="#f0c0c0"/>
<rect x="590.8" y="309.8" width="1.2" height="1.2" fill="#bfe8f0"/>
<rect x="700.4" y="233.4" width="1.2" height="1.2" fill="#bfe8f0"/>
<rect x="506.0" y="326.4" width="1.2" height="1.2" fill="#bfe8f0"/>
<rect x="476.6" y="368.7" width="1.2" height="1.2" fill="#bfe8f0"/>
<rect x="553.4" y="364.6" width="1.2" height="1.2" fill="#bfe8f0"/>
<rect x="533.1" y="332.0" width="1.2" height="1.2" fill="#bfe8f0"/>
<rect x="526.4" y="359.2" width="1.2" height="1.2" fill="#f0e0a0"/>
<rect x="472.0" y="385.0" width="1.2" height="1.2" fill="#bfe8f0"/>
<rect x="579.4" y="405.4" width="1.2" height="1.2" fill="#bfe8f0"/>
<rect x="610.6" y="344.2" width="1.2" height="1.2" fill="#f0b070"/>
<rect x="599.4" y="345.0" width="1.2" height="1.2" fill="#e8e8e0"/>
<rect x="680.8" y="317.4" width="1.2" height="1.2" fill="#f0e0a0"/>
<rect x="620.1" y="364.8" width="1.2" height="1.2" fill="#bfe8f0"/>
<rect x="652.7" y="361.9" width="1.2" height="1.2" fill="#bfe8f0"/>
<rect x="737.0" y="295.4" width="1.2" height="1.2" fill="#f0e0a0"/>
<rect x="254.9" y="320.6" width="1.2" height="1.2" fill="#bfe8f0"/>
<rect x="291.1" y="320.6" width="1.2" height="1.2" fill="#bfe8f0"/>
<rect x="353.6" y="341.4" width="1.2" height="1.2" fill="#e8e8e0"/>
<rect x="351.1" y="323.1" width="1.2" height="1.2" fill="#e8e8e0"/>
<rect x="313.6" y="398.1" width="1.2" height="1.2" fill="#e8e8e0"/>
<rect x="347.4" y="406.9" width="1.2" height="1.2" fill="#bfe8f0"/>
<rect x="282.4" y="353.9" width="1.2" height="1.2" fill="#a0f0d0"/>
<rect x="712.9" y="37.9" width="1.2" height="1.2" fill="#bfe8f0"/>
<rect x="151.9" y="313.1" width="1.2" height="1.2" fill="#e8e8e0"/>
<rect x="140.7" y="320.6" width="1.2" height="1.2" fill="#e8e8e0"/>
<rect x="133.2" y="361.9" width="1.2" height="1.2" fill="#bfe8f0"/>
<rect x="155.7" y="361.9" width="1.2" height="1.2" fill="#bfe8f0"/>
<rect x="149.4" y="349.4" width="1.2" height="1.2" fill="#f0e0a0"/>
<circle cx="59.6" cy="47.1" r="1.0" fill="#e8e8d8"/>
<circle cx="108" cy="95.6" r="0.9" fill="#cfe8f0"/>
<circle cx="114.8" cy="79.5" r="0.8" fill="#dde"/>
<circle cx="171.8" cy="123.6" r="0.9" fill="#d8eef0"/>
<circle cx="211" cy="131.5" r="1.1" fill="#ffd8d0"/>
<circle cx="23.75" cy="128.75" r="1.0" fill="#d8f0f0"/>
<circle cx="33.5" cy="185" r="0.9" fill="#f0f0d0"/>
<circle cx="15" cy="66.5" r="0.9" fill="#cfeaf0"/>
<circle cx="113" cy="218.75" r="0.9" fill="#b8b8ff"/>
<circle cx="160.75" cy="228.25" r="0.9" fill="#e0f0e8"/>
<circle cx="83.75" cy="395.75" r="1.0" fill="#e8f8ff"/>
<circle cx="253" cy="366.75" r="1.0" fill="#eef8ff"/>
<circle cx="281.75" cy="325.75" r="0.9" fill="#f0c8a0"/>
<circle cx="240.5" cy="58.7" r="1.0" fill="#d8d8ff"/>
<circle cx="298.75" cy="74.25" r="1.0" fill="#e8f0ff"/>
<circle cx="339.5" cy="162.5" r="1.1" fill="#e0e0ff"/>
<circle cx="336.5" cy="181.6" r="1.0" fill="#e8f0ff"/>
<circle cx="331.3" cy="200.2" r="1.1" fill="#e8f0ff"/>
<circle cx="455.5" cy="208.75" r="1.1" fill="#e8f4ff"/>
<circle cx="474.75" cy="202.5" r="0.8" fill="#dde"/>
<circle cx="446" cy="158.75" r="0.9" fill="#eef"/>
<circle cx="488.5" cy="129.5" r="0.9" fill="#dff"/>
<circle cx="488.5" cy="88.75" r="0.9" fill="#dff"/>
<circle cx="513.75" cy="69.5" r="0.9" fill="#dff"/>
<circle cx="609" cy="55" r="0.9" fill="#f0f0c8"/>
<circle cx="701" cy="103.25" r="1.0" fill="#ffd0c8"/>
<circle cx="721" cy="62.5" r="0.9" fill="#f8c8c0"/>
<circle cx="414.75" cy="46.25" r="0.9" fill="#cfe8f0"/>
<circle cx="410.25" cy="63.75" r="0.9" fill="#f0b080"/>
<circle cx="493" cy="354.35" r="1.0" fill="#f8f0c0"/>
<circle cx="530.2" cy="376.6" r="1.0" fill="#f8f0c0"/>
<circle cx="601.1" cy="345.4" r="0.9" fill="#f8d0c0"/>
<circle cx="738.5" cy="366.3" r="0.8" fill="#f8e0c0"/>
<circle cx="739.6" cy="378.75" r="0.9" fill="#f8f0c0"/>
<circle cx="529.1" cy="293.1" r="0.9" fill="#e8f8ff"/>
<circle cx="436" cy="200.5" r="0.8" fill="#cfe8f0"/>
<circle cx="378" cy="167.5" r="0.8" fill="#cfe8f0"/>
<circle cx="572.6" cy="408.7" r="0.8" fill="#22cc22"/>
<g font-family="Liberation Sans" font-size="3.8" fill="#86a2a6"><text x="27" y="131.8">Alhena</text><text x="213.5" y="135">Betelgeuse</text><text x="302" y="76.5">Bellatrix</text><text x="342.5" y="165">Mintaka</text><text x="341" y="185.2">Alnilam</text><text x="334.5" y="202">Alnitak</text><text x="448" y="161.5">Cursa</text><text x="460" y="211.5">Rigel</text><text x="497" y="357">Arneb</text></g>
<rect x="0" y="35" width="100" height="8" fill="#0b0d10"/>
<text x="1.8" y="42.2" font-family="Liberation Sans" font-size="4.9" textLength="95.9" lengthAdjust="spacingAndGlyphs" fill="#d8d8d8">LT: 10:23:43 AM AST&#160; Thursday, January 29, 2015</text>
<text x="685.3" y="42.4" font-family="Liberation Sans" font-size="5" textLength="25.9" lengthAdjust="spacingAndGlyphs" fill="#e0e0e0">Orion Nebula</text>
<rect x="0" y="406" width="70" height="8" fill="#020203"/>
<text x="2.3" y="412.8" font-family="Liberation Sans" font-size="4.8" textLength="49.7" lengthAdjust="spacingAndGlyphs" fill="#e0e0e0">Sabahiva, Ahmadi, Kawsh-</text>
</svg></div>

<div id="ctx" class="a">
<div class="ct" style="top:2.5px;font-size:4.7px">Orion Nebula, M 42</div>
<div class="ct" style="top:9.3px;font-size:4.7px">Gaseous Nebula</div>
<div class="ct" style="top:15.6px;font-size:4.7px">4.00<sup style="font-size:2.6px;vertical-align:1.6px">m</sup></div>
<div class="ct" style="top:22.9px;font-size:4.7px">Orion</div>
<div class="sep" style="top:30px"></div>
<div class="ct" style="top:32.2px;font-size:4px">Rise time: 2:59:53 PM AST</div>
<div class="ct" style="top:38px;font-size:4px">Set time: 2:39:06 AM AST</div>
<div class="ct" style="top:43.5px;font-size:4px">Transit time: 8:51:13 PM AST</div>
<div class="sep" style="top:50px"></div>
<div class="ci" style="top:54.1px">Center &amp; Track</div>
<div class="ci" style="top:64.7px">Add flag...</div>
<div class="ci" style="top:75.5px">Angular Distance To...</div>
<div class="a" style="left:62.8px;top:75.2px;width:0.6px;height:3.6px;background:#31363b"></div>
<div class="ci" style="top:85.6px">Starhop from here to...</div>
<div class="a" style="left:1px;top:93.7px;width:74px;height:10px;background:#3daee9;border-radius:0.8px"></div>
<div class="ci" style="top:96.3px;color:#fcfcfc">Details</div>
<div class="ci" style="top:106.1px">Attach Label</div>
<div class="ci" style="top:117.4px">Add to Observing WishList</div>
<div class="sep" style="top:126px"></div>
<div class="ci" style="top:130.7px">Image Resources</div>
<div class="ci" style="top:141.2px">Show SDSS Image</div>
<div class="ci" style="top:151.7px">Show DSS Image</div>
<div class="sep" style="top:161px"></div>
<div class="ci" style="top:165.1px">Information Resources</div>
<svg class="a" style="left:0;top:0" width="76" height="173"><path d="M68.8,131.6 L70.6,133.5 L68.8,135.4 M68.8,166 L70.6,167.9 L68.8,169.8" fill="none" stroke="#31363b" stroke-width="0.8"/></svg>
</div>
<div id="status" class="a"></div>
<svg class="a" style="left:0;top:415px" width="752" height="8" viewBox="0 415 752 8">
<text x="2" y="421.3" font-family="Liberation Sans" font-size="5" textLength="20" lengthAdjust="spacingAndGlyphs" fill="#26292c">Empty sky</text>
<text x="653.2" y="421.3" font-family="Liberation Sans" font-size="5.1" textLength="98.8" lengthAdjust="spacingAndGlyphs" fill="#26292c">+47° 21' 47", -57° 22' 54"&#160; 05h 35m 45s, -5° 23' 24"</text>
</svg>

</div></body></html>
